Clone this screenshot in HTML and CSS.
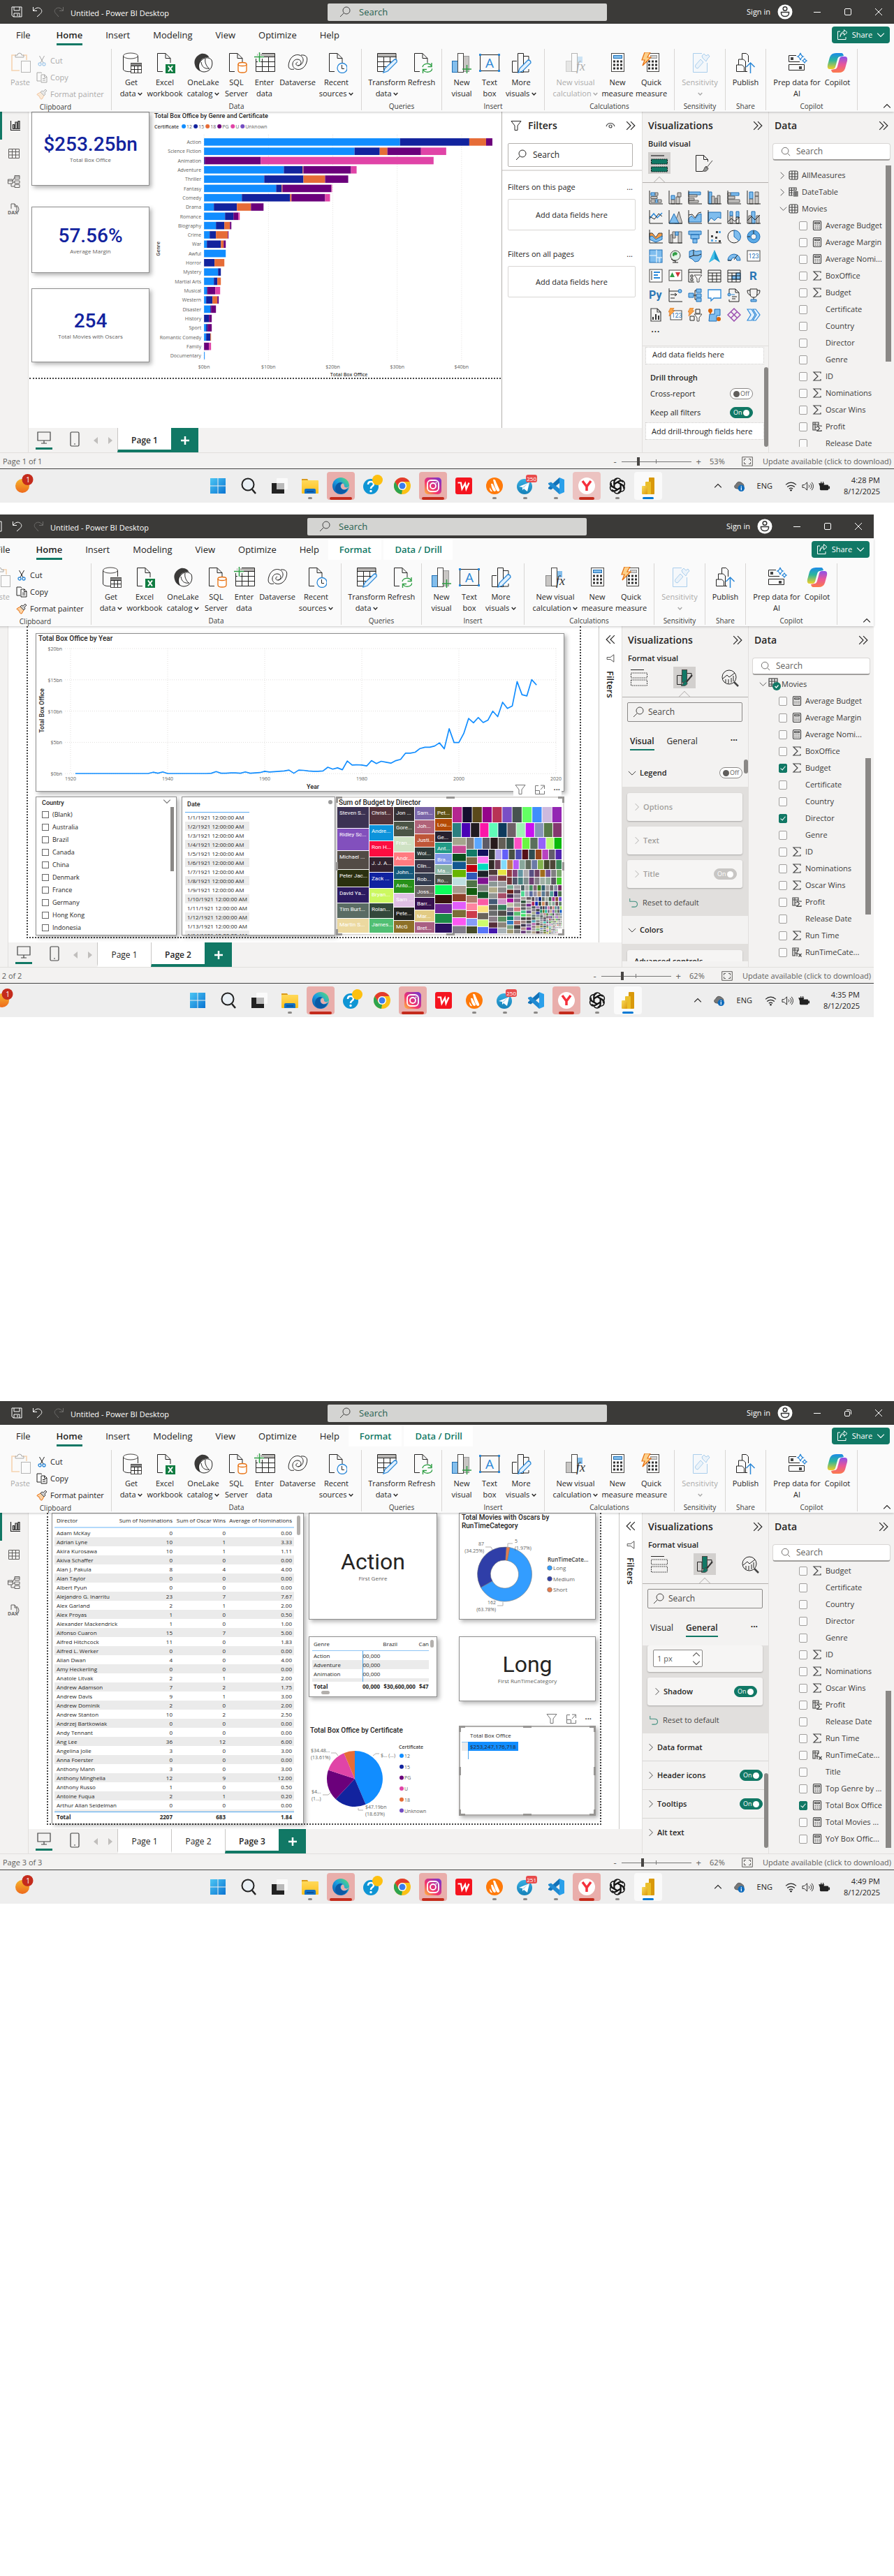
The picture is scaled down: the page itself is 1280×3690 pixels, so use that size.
FILE: index.html
```html
<!DOCTYPE html>
<html lang="en">
<head>
<meta charset="utf-8">
<title>Movies report - Power BI Desktop</title>
<link rel="stylesheet" href="styles.css">
</head>
<body>

<svg class="sprite" aria-hidden="true">
  <defs>
    <linearGradient id="gr-edge" x1="0" y1="1" x2="1" y2="0"><stop offset="0" stop-color="#0b4fa0"/><stop offset=".5" stop-color="#1b9de2"/><stop offset="1" stop-color="#5fe36a"/></linearGradient>
    <linearGradient id="gr-insta" x1="0" y1="1" x2="1" y2="0"><stop offset="0" stop-color="#fdc13a"/><stop offset=".4" stop-color="#f5326e"/><stop offset="1" stop-color="#6a35d8"/></linearGradient>
    <linearGradient id="gr-win" x1="0" y1="0" x2="1" y2="1"><stop offset="0" stop-color="#4cc6f4"/><stop offset="1" stop-color="#0a74d2"/></linearGradient>
    <linearGradient id="gr-sun" x1="0" y1="0" x2="0" y2="1"><stop offset="0" stop-color="#f5b52c"/><stop offset="1" stop-color="#ee6a1c"/></linearGradient>
    <linearGradient id="gr-folder" x1="0" y1="0" x2="0" y2="1"><stop offset="0" stop-color="#ffd95a"/><stop offset="1" stop-color="#fdbf1d"/></linearGradient>
    <linearGradient id="gr-tg" x1="0" y1="0" x2="0" y2="1"><stop offset="0" stop-color="#37aee2"/><stop offset="1" stop-color="#1581b8"/></linearGradient>
    <linearGradient id="gr-pbi" x1="0" y1="0" x2="1" y2="1"><stop offset="0" stop-color="#f9dc5c"/><stop offset="1" stop-color="#dc9a0d"/></linearGradient>
    <linearGradient id="gr-cp1" x1="0" y1="0" x2="0" y2="1"><stop offset="0" stop-color="#1b8ae8"/><stop offset=".45" stop-color="#2cb59d"/><stop offset="1" stop-color="#f3cf25"/></linearGradient>
    <linearGradient id="gr-cp2" x1="0" y1="0" x2="0" y2="1"><stop offset="0" stop-color="#8c52e8"/><stop offset=".5" stop-color="#e8569a"/><stop offset="1" stop-color="#fc7a4a"/></linearGradient>
  </defs>

  <!-- window chrome -->
  <symbol id="save" viewBox="0 0 16 16"><path d="M1 1h14v14H3l-2-2zM4 1v5h8V1M4 15v-5h8v5M9 11v3" class="s-lt"/></symbol>
  <symbol id="undo" viewBox="0 0 16 16"><path d="M1.500 1v5.500h5.500M2 6C5 2 9 1 12 3.500c3 3 2 5-1 8L7 15" class="s-lt"/></symbol>
  <symbol id="redo" viewBox="0 0 16 16"><path d="M14.500 1v5.500H9M14 6C11 2 7 1 4 3.500c-3 3-2 5 1 8L8 15" stroke="#6f6e6c" fill="none"/></symbol>
  <symbol id="find" viewBox="0 0 16 16"><circle cx="10" cy="6" r="5" class="s"/><path d="M6.500 9.500L1 15" class="s"/></symbol>
  <symbol id="findr" viewBox="0 0 16 16"><circle cx="7" cy="7" r="5.500" class="s"/><path d="M11 11l4 4" class="s"/></symbol>
  <symbol id="avatar" viewBox="0 0 22 22"><circle cx="11" cy="11" r="10.500" fill="#fff"/><circle cx="11" cy="6.500" r="2.800" fill="none" stroke="#333" stroke-width="1.500"/><path d="M5.500 11.500h11v1.500c0 6-11 6-11 0z" fill="none" stroke="#333" stroke-width="1.500"/></symbol>
  <symbol id="min" viewBox="0 0 12 12"><path d="M1 6.500h10" class="s-lt"/></symbol>
  <symbol id="max" viewBox="0 0 12 12"><rect x="1.500" y="1.500" width="9" height="9" rx="1.500" class="s-lt"/></symbol>
  <symbol id="restore" viewBox="0 0 12 12"><rect x="1.500" y="3.500" width="7" height="7" rx="1.500" class="s-lt"/><path d="M4 1.500h4.500q2 0 2 2V8" class="s-lt"/></symbol>
  <symbol id="close" viewBox="0 0 12 12"><path d="M1 1l10 10M11 1L1 11" class="s-lt"/></symbol>
  <symbol id="share" viewBox="0 0 16 16"><path d="M5 3H1.500v11.500H13V11M5 10.500C5.500 7 7.500 5.500 10.500 5.500V8.500L15 4.500 10.500.7v2.800C7 3.500 5 6.500 5 10.500z" class="s-lt"/></symbol>
  <symbol id="chev" viewBox="0 0 10 10"><path d="M1 3l4 4 4-4" class="s"/></symbol>
  <symbol id="chev-r" viewBox="0 0 10 14"><path d="M2 1l6 6-6 6" class="s"/></symbol>
  <symbol id="chev-d" viewBox="0 0 14 10"><path d="M1 2l6 6 6-6" class="s"/></symbol>
  <symbol id="dbl" viewBox="0 0 12 12"><path d="M1 1l5 5-5 5M6 1l5 5-5 5" class="s"/></symbol>
  <symbol id="dbl-l" viewBox="0 0 12 12"><path d="M6 1L1 6l5 5M11 1L6 6l5 5" class="s"/></symbol>

  <!-- ribbon -->
  <symbol id="paste" viewBox="0 0 30 30"><path d="M9 4H3v22h11M19 4h5v7" fill="none" stroke="#f0973c" stroke-width="1.600"/><path d="M8 7h12V4h-3a3 3 0 0 0-6 0H8z" class="s"/><rect x="16.500" y="12.500" width="13" height="16" fill="#fff" class="so"/></symbol>
  <symbol id="cut" viewBox="0 0 14 16"><path d="M3.500 1L9 11M10.500 1L5 11" class="s"/><circle cx="4" cy="13" r="2" class="sb"/><circle cx="10" cy="13" r="2" class="sb"/></symbol>
  <symbol id="copy" viewBox="0 0 16 16"><path d="M6 13H1V1h6l1 1M7 4h5l3 3v8H7zM11.500 4v3.500H15M9 9.500h4M9 12h4" class="s"/></symbol>
  <symbol id="painter" viewBox="0 0 16 16"><path d="M1 8l5-3 5 5-3 5c-2 0-3-1-3-3-1 0-1-1-1-2-2 0-3-1-3-2z" fill="#fbd3a6" stroke="#e8700f"/><path d="M6 5l2-2 2 1 3-3 2 2-3 3 1 2-2 2z" fill="#d0d0d0" class="so"/></symbol>
  <symbol id="getdata" viewBox="0 0 30 30"><path d="M3.500 5v19c0 3 6 4 11 3.500M24.500 5v9" class="s"/><ellipse cx="14" cy="5" rx="10.500" ry="4" fill="#fff" class="so"/><rect x="14.500" y="15.500" width="15" height="14" fill="#fff" class="so"/><path d="M14.500 16h15v3h-15z" fill="#888"/><path d="M14.500 19.500h15M14.500 24.500h15M19.500 19v10M24.500 19v10" class="s"/></symbol>
  <symbol id="page" viewBox="0 0 30 30"><path d="M12 27.500H4.500v-26H16l7 7V15M16 1.500v7h7" class="s"/></symbol>
  <symbol id="excel" viewBox="0 0 30 30"><use href="#page"/><rect x="16" y="17" width="14" height="13" fill="#107c41"/><path d="M20 19.500l6 8M26 19.500l-6 8" stroke="#fff" stroke-width="2"/></symbol>
  <symbol id="onelake" viewBox="0 0 30 30"><path d="M12 2C4 5 1 12 3 18c1 5 5 8 8 9-3-6-3-13 3-18 5-2 9-3 10 0-1-5-6-8-12-7z" fill="#3b3a39"/><path d="M12 14c1 7 5 10 12 9M27 11c3 8-2 17-11 17-8 0-11-9-5-15 4-6 12-7 16-2zM18 9c-1 5 1 10 5 14" class="s"/></symbol>
  <symbol id="sql" viewBox="0 0 30 30"><use href="#page"/><path d="M17 17v9c0 4 12 4 12 0v-9" fill="#fff" stroke="#e8700f" stroke-width="1.300"/><ellipse cx="23" cy="17" rx="6" ry="2.500" fill="#fff" stroke="#e8700f" stroke-width="1.300"/></symbol>
  <symbol id="enter" viewBox="0 0 30 30"><path d="M4 2h25v4H4z" fill="#b8b6b4"/><path d="M2.500 9v18.500h27v-26H11M2.500 13.500h27M2.500 20.500h27M11.500 9v18.500M20.500 6v21.500M11 6.500h18" class="s"/><path d="M7 0v14M0 7h14" stroke="#fafafa" stroke-width="4"/><path d="M7.500 0v14M0 6.500h14" stroke="#2f9e44" stroke-width="1.500"/></symbol>
  <symbol id="dataverse" viewBox="0 0 30 30"><path d="M20 4c8-1 10 4 8 10-2 8-9 12-15 10-8-3-6-14 2-14 6 0 7 8 1 9-4 0-4-4-1-5M10 24c-8 2-9-4-7-10C5 6 12 2 18 4c8 3 6 14-2 15" class="s"/></symbol>
  <symbol id="recent" viewBox="0 0 30 30"><use href="#page"/><circle cx="23" cy="22.500" r="7" fill="#fff" stroke="#2b88d8" stroke-width="1.300"/><path d="M22.500 18v5.500H26" class="s"/></symbol>
  <symbol id="transform" viewBox="0 0 30 30"><path d="M2 2h26v4H2z" fill="#b8b6b4"/><path d="M28 12V1.500H1.500v26H12M1.500 6.500h27M1.500 13.500h24M1.500 20.500h15M10.500 6v21M19.500 6v10" class="s"/><path d="M10 29l2-6L26 10q4 0 3 4L16 27z" fill="#e2f1fd" stroke="#2b88d8" stroke-width="1.300"/></symbol>
  <symbol id="refresh" viewBox="0 0 30 30"><use href="#page"/><path d="M16 21c1-5 10-7 13-1M29 15v5.500h-5.500M30 23c-1 6-10 7-13 2M16.500 30v-5.500H22" fill="#fff" stroke="#2f9e44" stroke-width="1.400"/></symbol>
  <symbol id="newvisual" viewBox="0 0 30 30"><rect x="1.500" y="12.500" width="9" height="16" fill="#83beec" stroke="#1f6fb5"/><rect x="17.500" y="5.500" width="8" height="22" fill="#c8c6c4" stroke="#999"/><rect x="9.500" y="1.500" width="8" height="27" fill="#fff" class="so"/><path d="M22.500 18v12M16 24h13" stroke="#2f9e44" stroke-width="1.500"/></symbol>
  <symbol id="textbox" viewBox="0 0 30 30"><rect x="1.500" y="3.500" width="27" height="23" class="s"/><path d="M0 2h3v3H0zM27 2h3v3h-3zM0 25h3v3H0zM27 25h3v3h-3z" fill="#2b88d8"/><text x="15" y="22" font-size="19" text-anchor="middle" fill="#2b88d8" class="segoe">A</text></symbol>
  <symbol id="morevisuals" viewBox="0 0 30 30"><path d="M9 12.500H2.500v16h16v-27h-8v27M19 5.500h7v6M26 24v4h-8" class="s"/><path d="M11 29l2-6L25 11q4 0 4 4L17 27z" fill="#e2f1fd" stroke="#2b88d8" stroke-width="1.300"/></symbol>
  <symbol id="fx" viewBox="0 0 30 30"><rect x="1.500" y="12.500" width="9" height="15" fill="#c8c6c4" stroke="#888"/><rect x="16" y="6" width="9" height="9" fill="#83beec"/><rect x="9.500" y="1.500" width="8" height="26" fill="#fff" class="so"/><text x="16" y="26" font-size="18" font-style="italic" fill="#333" class="serif">fx</text></symbol>
  <symbol id="measure" viewBox="0 0 30 30"><rect x="6.500" y="1.500" width="18" height="26" fill="#fff" class="so"/><rect x="9.500" y="4.500" width="12" height="4" fill="#83beec" stroke="#1f6fb5"/><path d="M9 13h13M9 18h13M9 23h13" stroke="#333" stroke-width="3" stroke-dasharray="3 2"/></symbol>
  <symbol id="quick" viewBox="0 0 30 30"><rect x="8.500" y="1.500" width="17" height="26" fill="#fff" class="so"/><rect x="13.500" y="4.500" width="9" height="4" fill="#d0d0d0" stroke="#999"/><path d="M10 13h13M10 18h13M10 23h13" stroke="#333" stroke-width="3" stroke-dasharray="3 2"/><path d="M5 0h8L9 7h5L2 19l3-8H1z" fill="#fcd08a" stroke="#e8700f" stroke-width="1.200"/></symbol>
  <symbol id="sensitivity" viewBox="0 0 30 30"><path d="M18 1.500H5.500v27h20V15" fill="#eef6fd" stroke="#2b88d8"/><path d="M9 18L16 10l4 4-8 9q-5-1-3-5zM18 5l3-3 3 3 3-2 2 3-3 3-2 4-5-5z" fill="#d5e9fa" stroke="#2b88d8"/></symbol>
  <symbol id="publish" viewBox="0 0 30 30"><path d="M10.500 10V1.500h6l3 3V14M5.500 18v-8h7l3 3v14M2.500 27.500V18h8l3 3v6.500zM14 27.500h4" class="s"/><path d="M22.500 30V15M16.500 21l6-6 6 6" fill="none" stroke="#2b88d8" stroke-width="1.500"/></symbol>
  <symbol id="prep" viewBox="0 0 30 30"><path d="M14 4.500H3.500v9H19M3.500 17.500h22v8h-22z" class="s"/><path d="M6 7h4v4H6zM18 20h4v4h-4z" fill="#444"/><path d="M20 1q1 4 4 5-3 1-4 5-1-4-4-5 3-1 4-5zM26 9q1 2 3 3-2 1-3 3-1-2-3-3 2-1 3-3z" fill="#fff" stroke="#2b88d8" stroke-width="1.200"/></symbol>
  <symbol id="copilot" viewBox="0 0 30 30"><path d="M13 1h8q2 0 3 4l-5 1q-3 0-4 4l-3 11q-1 3-4 3H4q-4 0-3-6l3-11Q6 1 13 1z" fill="url(#gr-cp1)"/><path d="M17 29H9q-2 0-3-4l5-1q3 0 4-4l3-11q1-3 4-3h4q4 0 3 6l-3 11q-2 6-9 6z" fill="url(#gr-cp2)"/></symbol>

  <!-- navigation rail -->
  <symbol id="r-report" viewBox="0 0 16 16"><path d="M1.500 1v13.500H15M4.500 6.500h2v6h-2zM8 3h2.500v9.500H8zM12 1.500h2v11h-2z" fill="none" stroke="#222" stroke-width="1.200"/></symbol>
  <symbol id="r-table" viewBox="0 0 16 16"><path d="M.5 1.500h15v13H.5zM.5 5.500h15M.5 10h15M5.500 1.500v13M10.500 1.500v13" class="s"/></symbol>
  <symbol id="r-model" viewBox="0 0 18 18"><path d="M10 .5h7v5h-7zM10 8h7v3.500h-7zM10 13.500h7v4h-7zM.5 6h6.500v6H.5zM.5 8H7M10 2.500h7M7 8l3-5M7 10h3M5 12v4h5" class="s"/></symbol>
  <symbol id="r-dax" viewBox="0 0 18 18"><path d="M5 8V1h5l3 4v6M10 1v4h3M13 3q3 3 3 6t-3 6" class="s"/><text x="0" y="16" font-size="7" font-weight="700" fill="#666" class="segoe">DAX</text></symbol>

  <!-- panes -->
  <symbol id="funnel" viewBox="0 0 16 16"><path d="M1 1.500h14L10 8v6.500H6V8z" class="s"/></symbol>
  <symbol id="eye" viewBox="0 0 14 10"><path d="M1 6c2-6 10-6 12 0" class="s2"/><circle cx="7" cy="6" r="2" class="s2"/></symbol>
  <symbol id="focus" viewBox="0 0 16 16"><path d="M6 2.500H1.500v12h13V10M1.500 9.500h6v5M9 2h5.500v5M14 2.500L9 8" class="s"/></symbol>
  <symbol id="build" viewBox="0 0 26 26"><path d="M1 2h19" stroke="#444" stroke-width="1.500"/><rect x="1.500" y="7" width="23" height="7" fill="#117865" stroke="#111" stroke-dasharray="2 1"/><rect x="1.500" y="18" width="23" height="7" fill="#117865" stroke="#111" stroke-dasharray="2 1"/></symbol>
  <symbol id="build-off" viewBox="0 0 26 26"><path d="M1 1.500h19" class="s"/><rect x="1.500" y="6" width="23" height="7" fill="none" stroke="#444" stroke-dasharray="2 1"/><rect x="1.500" y="16" width="23" height="8" fill="none" stroke="#444" stroke-dasharray="2 1"/></symbol>
  <symbol id="fmt-page" viewBox="0 0 26 26"><path d="M11 24.500H1.500v-23h11l6 6v3M12.500 1.500v6h6" class="s"/><path d="M25 9l-9 11M16 17l3 3c-1 4-4 5-8 4 2-1 2-3 3-5z" fill="#999" class="so"/></symbol>
  <symbol id="fmt-visual" viewBox="0 0 26 26"><path d="M2.500 9.500H9v13H2.500zM16 6.500h7v5" class="s"/><rect x="9.500" y="1.500" width="7" height="18" fill="#117865" class="so"/><path d="M24 9l-9 11" stroke="#333" stroke-width="2"/><path d="M14 17l3 3c0 4-4 5-9 4 3-1 3-4 6-7z" fill="#117865" class="so"/></symbol>
  <symbol id="analytics" viewBox="0 0 26 26"><circle cx="12" cy="12" r="10" class="s"/><path d="M19 19l6 6" stroke="#444" stroke-width="2.500"/><path d="M3 14l6-5 3 3 8-6M7 20v-5M11 21v-6M15 20v-7M18 18v-8" class="s"/></symbol>
  <symbol id="reset" viewBox="0 0 16 16"><path d="M2 1v5h5M2 6h7c7 0 7 9 0 9H5" fill="none" stroke="#3f8f7f" stroke-width="1.200"/></symbol>
  <symbol id="tbl" viewBox="0 0 14 14"><rect x="1" y="1" width="12" height="12" rx="2" class="s2"/><path d="M1 5h12M1 9h12M5 1v12M9 1v12" class="s2"/></symbol>
  <symbol id="tbl-date" viewBox="0 0 14 14"><path d="M6 12H1V1h10v4M1 4.500h10M1 8h5M4.500 1v11M8 1v4" class="s2"/><rect x="7" y="6" width="6.500" height="7.500" fill="#555"/><path d="M8 8h4.500M8 10h4.500M8 12h4.500" stroke="#f3f2f1" stroke-width=".8" stroke-dasharray="1 .7"/></symbol>
  <symbol id="tbl-ok" viewBox="0 0 18 18"><rect x="1" y="1" width="12" height="11" class="s2"/><path d="M1 5h12M1 9h12M5 1v11M9 1v11" class="s2"/><circle cx="12" cy="12" r="6" fill="#117865"/><path d="M9.500 12l2 2 3-3.500" fill="none" stroke="#fff" stroke-width="1.200"/></symbol>
  <symbol id="calc" viewBox="0 0 14 14"><rect x="1.500" y=".5" width="11" height="13" rx="1.500" class="s2"/><rect x="3.700" y="2.700" width="6.600" height="2" class="s2"/><path d="M3.500 7.500h7.500M3.500 9.500h7.500M3.500 11.500h7.500" stroke="#444" stroke-width="1.200" stroke-dasharray="1.500 1.300"/></symbol>
  <symbol id="sum" viewBox="0 0 14 14"><path d="M12 3V1H2l6 6-6 6h10v-2" class="s2"/></symbol>
  <symbol id="colsum" viewBox="0 0 14 14"><path d="M7 12H1V1h8v4M1 4h8M4 1v11M4 8h3M13 7V6H7l3.500 3.500L7 13.300h6V12" class="s2"/></symbol>
  <symbol id="colfx" viewBox="0 0 14 14"><path d="M5 12H1V1h8v4M1 4h8M4 1v11M4 8h2M9 5.500q-2-1-2 2V13M5.500 9H9M9.500 9l4 4.500M13.500 9l-4 4.500" class="s2"/></symbol>

  <!-- page bar and tray -->
  <symbol id="desktop" viewBox="0 0 20 18"><path d="M1 1h18v12H1zM10 13v4M6 17h8" class="s2"/></symbol>
  <symbol id="phone" viewBox="0 0 14 22"><rect x="1" y="1" width="12" height="20" rx="1.500" class="s2"/><path d="M6 18h2" class="s2"/></symbol>
  <symbol id="tri-l" viewBox="0 0 6 10"><path d="M6 0v10L0 5z" fill="#c0bebc"/></symbol>
  <symbol id="tri-r" viewBox="0 0 6 10"><path d="M0 0v10l6-5z" fill="#c0bebc"/></symbol>
  <symbol id="plus" viewBox="0 0 12 12"><path d="M6 0v12M0 6h12" stroke="#fff" stroke-width="2.500"/></symbol>
  <symbol id="fit" viewBox="0 0 16 14"><path d="M.7.7h14.600v12.600H.7zM3.500 6V3.500H6M10 3.500h2.500V6M12.500 8v2.500H10M6 10.500H3.500V8" class="s"/></symbol>
  <symbol id="cloud" viewBox="0 0 18 18"><path d="M3 12q-3-3 1-6 3-6 9-2 3 2 3 5H9l-2 4z" fill="#777" stroke="#555"/><circle cx="12" cy="12" r="5" fill="#0f6cbd"/><path d="M12 10.500V15M12 8.500V9.700" stroke="#fff" stroke-width="1.300"/></symbol>
  <symbol id="wifi" viewBox="0 0 16 16"><path d="M1 6q7-6 14 0M3 9q5-4 10 0M5.500 11.500q2.500-2 5 0" fill="none" stroke="#222" stroke-width="1.200"/><circle cx="8" cy="13.500" r="1.200" fill="#222"/></symbol>
  <symbol id="sound" viewBox="0 0 18 16"><path d="M1 6v4h3l4 4V2L4 6zM10.500 6q2 2 0 4M13 4q3.500 4 0 8M15 2q5 6 0 12" class="s"/></symbol>
  <symbol id="battery" viewBox="0 0 18 16"><rect x="2" y="6" width="13" height="8" rx="1.500" fill="#222"/><path d="M16 8v4" stroke="#222" stroke-width="2"/><path d="M4 1v4M1 4h7l-2 5H3zM7 1v3" fill="#222" stroke="#222" stroke-width="1.200"/></symbol>

  <!-- taskbar apps -->
  <symbol id="a-weather" viewBox="0 0 26 28"><circle cx="10" cy="17" r="10" fill="url(#gr-sun)"/><circle cx="17.500" cy="8" r="8" fill="#c42b1c"/></symbol>
  <symbol id="a-windows" viewBox="0 0 24 24"><path d="M1 1h10.500v10.500H1zM12.500 1H23v10.500H12.500zM1 12.500h10.500V23H1zM12.500 12.500H23V23H12.500z" fill="url(#gr-win)"/></symbol>
  <symbol id="a-search" viewBox="0 0 24 24"><circle cx="11" cy="10" r="8.500" fill="#eaf0f5" stroke="#222" stroke-width="2"/><path d="M17 17l5 6" stroke="#222" stroke-width="2.500"/></symbol>
  <symbol id="a-taskview" viewBox="0 0 24 24"><rect x="8" y="1" width="16" height="16" rx="1" fill="#fafafa"/><path d="M1 8h7v9h11v6H1z" fill="#222"/><rect x="8" y="8" width="11" height="9" fill="#b9b9b9"/></symbol>
  <symbol id="a-files" viewBox="0 0 24 24"><path d="M0 2h8l2 3h14v3H0z" fill="#d99a1b"/><rect y="4" width="24" height="19" rx="1" fill="url(#gr-folder)"/><path d="M4 23v-5q0-2 2-2h12q2 0 2 2v5z" fill="#1170c4"/><path d="M7 20h10" stroke="#0a4c8c" stroke-width="1.500"/></symbol>
  <symbol id="a-edge" viewBox="0 0 24 24"><circle cx="12" cy="12" r="12" fill="url(#gr-edge)"/><path d="M22 15q-3 4-7 2c-5-2-5-8 0-9-5-3-11 1-11 8 0 5 6 9 11 7 4-1 6-4 7-8z" fill="#0c59a4"/><path d="M15 8.500c-4 1-4 7 0 8.500 4 1 8-2 9-5-2 3-5 3-7 1 0-2 0-3-2-4.500z" fill="#e8adab"/></symbol>
  <symbol id="a-help" viewBox="0 0 28 28"><circle cx="11" cy="17" r="11" fill="#0f95d4"/><path d="M7 14q0-4 4-4t4 3.500q0 2-2.500 3.500-1.500 1-1.500 3" fill="none" stroke="#fff" stroke-width="2.600"/><circle cx="11" cy="23.500" r="1.700" fill="#fff"/><circle cx="20.500" cy="7.500" r="7.500" fill="#fdc010"/></symbol>
  <symbol id="a-chrome" viewBox="0 0 24 24"><circle cx="12" cy="12" r="12" fill="#fbc116"/><path d="M1.600 6A12 12 0 0 1 22.400 6H12a6 6 0 0 0-5.200 9z" fill="#e33b2e"/><path d="M1.600 6L6.800 15a6 6 0 0 0 5.200 3l-1 6A12 12 0 0 1 1.600 6z" fill="#2da44f"/><circle cx="12" cy="12" r="6" fill="#fff"/><circle cx="12" cy="12" r="4.500" fill="#3b7ded"/></symbol>
  <symbol id="a-insta" viewBox="0 0 24 24"><rect width="24" height="24" rx="5" fill="url(#gr-insta)"/><rect x="4" y="4" width="16" height="16" rx="5" fill="none" stroke="#fff" stroke-width="1.800"/><circle cx="12" cy="12" r="4" fill="none" stroke="#fff" stroke-width="1.800"/><circle cx="16.500" cy="7.500" r="1" fill="#fff"/></symbol>
  <symbol id="a-wps" viewBox="0 0 24 24"><rect width="24" height="24" rx="3" fill="#f5141f"/><path d="M3.500 7.500h4.500l1.500 9L14 8.500l1.500 8 4-9" fill="none" stroke="#fff" stroke-width="2.200"/></symbol>
  <symbol id="a-avast" viewBox="0 0 24 24"><circle cx="12" cy="12" r="12" fill="#ff7a0a"/><path d="M10 3q3-1 4 3l5 11q1 3-2 3-4-1-7-17zM7 9q2-1 3 1l4 8q0 2-2 2-4-2-5-11zM5 14l4 6q-4 1-4-6z" fill="#fff"/></symbol>
  <symbol id="a-telegram" viewBox="0 0 28 28"><circle cx="11" cy="17" r="11" fill="url(#gr-tg)"/><path d="M3 17l15-6-3 13-5-4-2 2v-4z" fill="#fff"/><path d="M8 18l8-6-6 7z" fill="#b9d9ec"/></symbol>
  <symbol id="a-code" viewBox="0 0 24 24"><path d="M17 0v8l-12 9.500L1 16v-1.500z" fill="#1272b8"/><path d="M17 24v-8L5 6.500 1 8v1.500z" fill="#1f8ad2"/><path d="M17 0l7 3v18l-7 3z" fill="#2aa0ea"/></symbol>
  <symbol id="a-yandex" viewBox="0 0 24 24"><circle cx="12" cy="12" r="12" fill="#fff"/><path d="M6 5l6 8v6M18 5l-6 8" fill="none" stroke="#f5303c" stroke-width="3.500"/></symbol>
  <symbol id="a-gpt" viewBox="0 0 24 24"><g fill="none" stroke="#111" stroke-width="1.500"><path id="gpt-leaf" d="M7 15V6.500C7 .5 14-.8 16.700 3.600M7 10l7.200-4.200c2-1.100 4.200-.7 5.800.8"/><use href="#gpt-leaf" transform="rotate(60 12 12)"/><use href="#gpt-leaf" transform="rotate(120 12 12)"/><use href="#gpt-leaf" transform="rotate(180 12 12)"/><use href="#gpt-leaf" transform="rotate(240 12 12)"/><use href="#gpt-leaf" transform="rotate(300 12 12)"/></g></symbol>
  <symbol id="a-pbi" viewBox="0 0 24 24"><rect x="13" y="0" width="8" height="24" rx="1" fill="#d9990b"/><rect x="8" y="6" width="8" height="18" rx="1" fill="#ebbf2b"/><rect x="3" y="12" width="8" height="12" rx="1" fill="url(#gr-pbi)"/></symbol>

  <!-- visual gallery -->
  <symbol id="v1" viewBox="0 0 20 20"><path d="M3 3h6v4H3zM9 13h4v4H9z" class="gb"/><path d="M9 3h4v4H9zM3 8.500h9v3H3zM13 13h5v4h-5zM3 13h6v4H3z" class="gg"/><path d="M1 0v19h19" class="s"/></symbol>
  <symbol id="v2" viewBox="0 0 20 20"><path d="M4 7h5v6H4z" class="gb"/><path d="M4 13h5v6H4zM11 9h5v10h-5zM13 3h5v6h-5z" class="gg"/><path d="M1 0v19h19" class="s"/></symbol>
  <symbol id="v3" viewBox="0 0 20 20"><path d="M1 2h17v4H1z" class="gb"/><path d="M1 6h12v3H1zM1 11h8v3H1zM1 14h14v3H1z" class="gg"/><path d="M1 0v19h19" class="s"/></symbol>
  <symbol id="v4" viewBox="0 0 20 20"><path d="M2 2h4v17H2z" class="gb"/><path d="M6 8h4v11H6zM11 11h3v8h-3zM14 7h4v12h-4z" class="gg"/><path d="M1 0v19h19" class="s"/></symbol>
  <symbol id="v5" viewBox="0 0 20 20"><path d="M5 3h12v4H5z" class="gb"/><path d="M1 3h4v4H1zM1 8h10v4H1zM1 13h17v4H1z" class="gg"/><path d="M1 0v19h19" class="s"/></symbol>
  <symbol id="v6" viewBox="0 0 20 20"><path d="M4 2h5v10H4z" class="gb"/><path d="M4 12h5v7H4zM12 8h5v11h-5zM12 2h5v6h-5z" class="gg"/><path d="M1 0v19h19" class="s"/></symbol>
  <symbol id="v7" viewBox="0 0 20 20"><path d="M1 12l6-7 5 6 7-7" fill="none" stroke="#2b88d8" stroke-width="1.500"/><path d="M1 9l7 4 6-8 5 4M1 0v19h19" class="s"/></symbol>
  <symbol id="v8" viewBox="0 0 20 20"><path d="M9 19l6-17 5 17z" class="gg"/><path d="M1 19L8 5l7 14z" class="gb"/><path d="M1 0v19h19" class="s"/></symbol>
  <symbol id="v9" viewBox="0 0 20 20"><path d="M1 12l4-4 5 5 4-6 5-2v12H1z" class="gb"/><path d="M1 7l5-1 4 5 5-7 4-1M1 0v19h19" class="s"/></symbol>
  <symbol id="v10" viewBox="0 0 20 20"><path d="M1 3h18v9l-4-2-5 5-5-4-4 6z" class="gb"/><path d="M1 0v19h19" class="s"/></symbol>
  <symbol id="v11" viewBox="0 0 20 20"><path d="M4 8h4v11H4z" class="gg"/><path d="M4 2h4v6H4zM13 2h4v8h-4z" class="gb"/><path d="M13 10h4v9h-4zM1 17l5-5 5 4 7-6M1 0v19h19" class="s"/></symbol>
  <symbol id="v12" viewBox="0 0 20 20"><path d="M7 2h5v17H7z" class="gb"/><path d="M3 8h4v11H3zM14 8h4v11h-4z" class="gg"/><path d="M1 15l6-6 5 5 7-7M1 0v19h19" class="s"/></symbol>
  <symbol id="v13" viewBox="0 0 20 20"><path d="M1 5h4l5 6 4-6h5v5l-4 2-5 6-5-4-4-3z" fill="#f39b45" stroke="#444"/><path d="M1 10l4-1 5 5 9-5v5l-9 4-9-4z" class="gb"/><path d="M1 0v19h19" class="s"/></symbol>
  <symbol id="v14" viewBox="0 0 20 20"><path d="M3 7h3v12H3zM6 3h4v9H6zM14 3h5v16h-5z" class="gg"/><path d="M10 3h4v5h-4z" class="gb"/><path d="M1 0v19h19" class="s"/></symbol>
  <symbol id="v15" viewBox="0 0 20 20"><path d="M1 2h18v5H1zM4 7h12v6H4zM7 13h6v6H7z" class="gb"/></symbol>
  <symbol id="v16" viewBox="0 0 20 20"><path d="M12 2h3v3h-3zM5 8h3v3H5zM11 10h3v3h-3zM16 15h3v3h-3z" fill="#444"/><path d="M16 2h3v3h-3zM5 14h3v3H5zM11 15h2v2h-2z" fill="#5aa9e6"/><path d="M1 0v19h19" class="s"/></symbol>
  <symbol id="v17" viewBox="0 0 20 20"><circle cx="10" cy="10" r="9" class="s"/><path d="M10 1v9l7 6a9 9 0 0 0-7-15z" class="gb"/></symbol>
  <symbol id="v18" viewBox="0 0 20 20"><circle cx="10" cy="10" r="6.500" fill="none" stroke="#5aa9e6" stroke-width="5"/><circle cx="10" cy="10" r="9" fill="none" stroke="#1f6fb5"/><circle cx="10" cy="10" r="4" fill="none" stroke="#1f6fb5"/><path d="M10 1v5M1 10h4" class="s"/></symbol>
  <symbol id="v19" viewBox="0 0 20 20"><rect x="1" y="1" width="18" height="18" class="gb"/><path d="M11 1v11h8M11 12v7M15 12v7M1 9h10" fill="none" stroke="#fff"/></symbol>
  <symbol id="v20" viewBox="0 0 20 20"><circle cx="10" cy="9" r="7" fill="#e6f4ea" class="so"/><path d="M6 6q4-4 7 0-1 4-4 2-1 4-3 1z" fill="#2f9e44"/><path d="M10 16v3M6 19h8M4 14q2 3 6 3" class="s"/></symbol>
  <symbol id="v21" viewBox="0 0 20 20"><path d="M2 3l6-2 3 2 8-1v9l-4 6-5 1-4-4-4-2z" class="gb"/><path d="M8 1v8l-6 2M8 9h6l5-2" class="s"/></symbol>
  <symbol id="v22" viewBox="0 0 20 20"><path d="M10 1l8 18-8-5-8 5z" fill="#1795c9"/><path d="M10 1v13l-8 5z" fill="#43c1e8"/></symbol>
  <symbol id="v23" viewBox="0 0 20 20"><path d="M1 16a9 9 0 0 1 18 0h-5a4 4 0 0 0-8 0z" class="gb"/><path d="M10 15l5-7M1 16h5" class="s"/></symbol>
  <symbol id="v24" viewBox="0 0 20 20"><rect x="1" y="2" width="18" height="15" fill="#fff" class="so"/><text x="10" y="13" font-size="9" text-anchor="middle" fill="#1f6fb5" class="din">123</text></symbol>
  <symbol id="v25" viewBox="0 0 20 20"><rect x="1" y="1" width="18" height="18" fill="#fff" class="so"/><path d="M7 5h9M7 9h6M7 13h9" stroke="#2b88d8" stroke-width="1.800"/><path d="M4 3v13" class="s"/></symbol>
  <symbol id="v26" viewBox="0 0 20 20"><rect x="1" y="2" width="18" height="15" fill="#fff" class="so"/><path d="M2 12l3.500-7L9 12z" fill="#2f9e44"/><path d="M10 5h7l-3.500 7z" fill="#d13438"/></symbol>
  <symbol id="v27" viewBox="0 0 20 20"><path d="M9 19H1V1h18v6M1 5h18M4 9h3v3H4zM4 14h3v3H4z" class="s"/><path d="M9 9h11l-4 5v5h-3v-5z" fill="#fff" class="so"/></symbol>
  <symbol id="v28" viewBox="0 0 20 20"><path d="M1 2h18v17H1zM1 6h18M1 10h18M1 15h18M7 6v13M13 6v13" class="s"/></symbol>
  <symbol id="v29" viewBox="0 0 20 20"><path d="M13 6h6v9h-6zM7 10h6v5H7z" class="gb"/><path d="M1 2h18v17H1zM1 6h18M1 10h18M1 15h18M7 6v13M13 6v13" class="s"/></symbol>
  <symbol id="v30" viewBox="0 0 20 20"><text x="4" y="16" font-size="17" font-weight="700" fill="#2b77b5" class="din">R</text></symbol>
  <symbol id="v31" viewBox="0 0 20 20"><text x="0" y="15" font-size="16" font-weight="700" fill="#2b77b5" class="din">Py</text></symbol>
  <symbol id="v32" viewBox="0 0 20 20"><path d="M1 0v19h19M1 4h13M3 9h8M3 14h6M9 7l3 2-3 2" class="s"/><circle cx="16.500" cy="4" r="2.500" class="gb"/></symbol>
  <symbol id="v33" viewBox="0 0 20 20"><path d="M1 7h7v6H1zM12 1h7v5h-7zM12 8h7v5h-7zM12 14h7v5h-7z" class="gb"/><path d="M8 10h4M10 3v13M10 3h2M10 16h2" class="s"/></symbol>
  <symbol id="v34" viewBox="0 0 20 20"><path d="M1 2h18v12H9l-4 4v-4H1z" fill="#fff" stroke="#2b88d8" stroke-width="1.300"/></symbol>
  <symbol id="v35" viewBox="0 0 20 20"><path d="M3 8V1h9l5 5v13H3v-3M12 1v5h5M7 12h7M7 15h5" class="s"/><circle cx="3" cy="9" r="2" class="gb"/><path d="M6 9h5" stroke="#2b88d8"/></symbol>
  <symbol id="v36" viewBox="0 0 20 20"><path d="M5 1h10v7q0 5-5 5t-5-5zM5 3H1q0 6 5 7M15 3h4q0 6-5 7M10 13v4" class="s"/><path d="M6 16h8v3H6z" class="gb"/></symbol>
  <symbol id="v37" viewBox="0 0 20 20"><path d="M3 1h9l5 5v13H3zM12 1v5h5" class="s2"/><path d="M6 17v-4M10 17V9M14 17v-6" stroke="#333" stroke-width="2"/></symbol>
  <symbol id="v38" viewBox="0 0 20 20"><rect x="3" y="4" width="16" height="13" fill="#fff" class="so"/><text x="12" y="14" font-size="9" text-anchor="middle" fill="#1f6fb5" class="din">123</text><path d="M3 0h5L6 4h3L1 12l1-6H0z" fill="#f7a54a" stroke="#d8650a" stroke-width=".6"/></symbol>
  <symbol id="v39" viewBox="0 0 20 20"><path d="M11 2h6v6h-6zM3 12h6v6H3z" class="s"/><path d="M9 9h11l-4 5v5h-3v-5z" fill="#fff" class="so"/><path d="M3 0h5L6 4h3L1 12l1-6H0z" fill="#f7a54a" stroke="#d8650a" stroke-width=".6"/></symbol>
  <symbol id="v40" viewBox="0 0 20 20"><path d="M3 9h7V2h8v9h-5v8H2z" class="gb"/><circle cx="4" cy="4" r="3" fill="#d8650a"/><path d="M2 5l2 5 2-5z" fill="#d8650a"/><circle cx="16" cy="16" r="3" fill="#d8650a"/></symbol>
  <symbol id="v41" viewBox="0 0 20 20"><path d="M10 1l9 9-9 9-9-9zM5.500 5.500l9 9M14.500 5.500l-9 9" fill="none" stroke="#9b4fb0" stroke-width="1.500"/></symbol>
  <symbol id="v42" viewBox="0 0 20 20"><path d="M1 2h6l5 8-5 8H1l5-8zM9 2h4l6 8-6 8H9l5-8z" fill="#e2f1fd" stroke="#2b88d8" stroke-width="1.200"/></symbol>
</svg>

<template id="chrome-template">
  <header class="titlebar">
    <div class="titlebar-left">
      <svg class="i16"><use href="#save"/></svg>
      <svg class="i16"><use href="#undo"/></svg>
      <svg class="i16"><use href="#redo"/></svg>
      <span class="doc-name">Untitled - Power BI Desktop</span>
    </div>
    <label class="top-search"><svg class="i16"><use href="#find"/></svg><input type="search" placeholder="Search" aria-label="Search"></label>
    <div class="titlebar-right">
      <a href="#" class="signin">Sign in</a>
      <svg class="avatar"><use href="#avatar"/></svg>
      <button class="winbtn" aria-label="Minimize"><svg class="i12"><use href="#min"/></svg></button>
      <button class="winbtn winbtn-size" aria-label="Maximize"><svg class="i12"><use href="#max"/></svg></button>
      <button class="winbtn" aria-label="Close"><svg class="i12"><use href="#close"/></svg></button>
    </div>
  </header>
  <div class="ribbon">
    <nav class="tabs">
      <button class="tab tab-file">File</button>
      <button class="tab tab-active">Home</button>
      <button class="tab">Insert</button>
      <button class="tab">Modeling</button>
      <button class="tab">View</button>
      <button class="tab">Optimize</button>
      <button class="tab">Help</button>
      <span class="context-tabs"><button class="tab tab-context">Format</button><button class="tab tab-context">Data / Drill</button></span>
      <button class="share"><svg class="i16"><use href="#share"/></svg><span>Share</span><svg class="i12 on-dark"><use href="#chev"/></svg></button>
    </nav>
    <div class="groups">
      <section class="group g-clipboard">
        <div class="group-body">
          <button class="rb disabled"><svg><use href="#paste"/></svg><span>Paste</span></button>
          <div class="clip-list needs-selection">
            <button class="small-btn"><svg class="i16"><use href="#cut"/></svg>Cut</button>
            <button class="small-btn"><svg class="i16"><use href="#copy"/></svg>Copy</button>
            <button class="small-btn"><svg class="i16"><use href="#painter"/></svg>Format painter</button>
          </div>
        </div>
        <h3>Clipboard</h3>
      </section>
      <section class="group g-data">
        <div class="group-body">
          <button class="rb"><svg><use href="#getdata"/></svg><span>Get<br>data <svg class="mini"><use href="#chev"/></svg></span></button>
          <button class="rb"><svg><use href="#excel"/></svg><span>Excel<br>workbook</span></button>
          <button class="rb"><svg><use href="#onelake"/></svg><span>OneLake<br>catalog <svg class="mini"><use href="#chev"/></svg></span></button>
          <button class="rb"><svg><use href="#sql"/></svg><span>SQL<br>Server</span></button>
          <button class="rb"><svg><use href="#enter"/></svg><span>Enter<br>data</span></button>
          <button class="rb"><svg><use href="#dataverse"/></svg><span>Dataverse</span></button>
          <button class="rb"><svg><use href="#recent"/></svg><span>Recent<br>sources <svg class="mini"><use href="#chev"/></svg></span></button>
        </div>
        <h3>Data</h3>
      </section>
      <section class="group g-queries">
        <div class="group-body">
          <button class="rb"><svg><use href="#transform"/></svg><span>Transform<br>data <svg class="mini"><use href="#chev"/></svg></span></button>
          <button class="rb"><svg><use href="#refresh"/></svg><span>Refresh</span></button>
        </div>
        <h3>Queries</h3>
      </section>
      <section class="group g-insert">
        <div class="group-body">
          <button class="rb"><svg><use href="#newvisual"/></svg><span>New<br>visual</span></button>
          <button class="rb"><svg><use href="#textbox"/></svg><span>Text<br>box</span></button>
          <button class="rb"><svg><use href="#morevisuals"/></svg><span>More<br>visuals <svg class="mini"><use href="#chev"/></svg></span></button>
        </div>
        <h3>Insert</h3>
      </section>
      <section class="group g-calc">
        <div class="group-body">
          <button class="rb needs-selection"><svg><use href="#fx"/></svg><span>New visual<br>calculation <svg class="mini"><use href="#chev"/></svg></span></button>
          <button class="rb"><svg><use href="#measure"/></svg><span>New<br>measure</span></button>
          <button class="rb"><svg><use href="#quick"/></svg><span>Quick<br>measure</span></button>
        </div>
        <h3>Calculations</h3>
      </section>
      <section class="group g-sens">
        <div class="group-body"><button class="rb disabled"><svg><use href="#sensitivity"/></svg><span>Sensitivity<br><svg class="mini"><use href="#chev"/></svg></span></button></div>
        <h3>Sensitivity</h3>
      </section>
      <section class="group g-share">
        <div class="group-body"><button class="rb"><svg><use href="#publish"/></svg><span>Publish</span></button></div>
        <h3>Share</h3>
      </section>
      <section class="group g-copilot">
        <div class="group-body">
          <button class="rb"><svg><use href="#prep"/></svg><span>Prep data for<br>AI</span></button>
          <button class="rb"><svg><use href="#copilot"/></svg><span>Copilot</span></button>
        </div>
        <h3>Copilot</h3>
      </section>
      <button class="collapse" aria-label="Collapse ribbon"><svg class="i12"><use href="#chev"/></svg></button>
    </div>
  </div>
</template>

<template id="rail-template">
  <button class="rail-btn rail-active" aria-label="Report view"><svg class="i16"><use href="#r-report"/></svg></button>
  <button class="rail-btn" aria-label="Table view"><svg class="i16"><use href="#r-table"/></svg></button>
  <button class="rail-btn" aria-label="Model view"><svg class="i18"><use href="#r-model"/></svg></button>
  <button class="rail-btn" aria-label="DAX query view"><svg class="i18"><use href="#r-dax"/></svg></button>
</template>

<template id="pagebar-template">
  <button class="view-btn view-active" aria-label="Desktop layout"><svg class="desktop"><use href="#desktop"/></svg></button>
  <button class="view-btn view-mobile" aria-label="Mobile layout"><svg class="phone"><use href="#phone"/></svg></button>
  <button class="page-arrow" aria-label="Previous page"><svg><use href="#tri-l"/></svg></button>
  <button class="page-arrow" aria-label="Next page"><svg><use href="#tri-r"/></svg></button>
</template>

<template id="bottom-template">
  <div class="statusbar">
    <span class="page-count"></span>
    <label class="zoom"><span>-</span><input type="range" min="10" max="150" aria-label="Zoom"><span>+</span></label>
    <span class="zoom-value"></span>
    <svg class="fit"><use href="#fit"/></svg>
    <a href="#" class="update">Update available (click to download)</a>
  </div>
  <footer class="taskbar">
    <div class="weather"><svg><use href="#a-weather"/></svg><span>1</span></div>
    <div class="apps"></div>
    <div class="tray">
      <svg class="i12 flip"><use href="#chev"/></svg>
      <svg class="i18"><use href="#cloud"/></svg>
      <span class="lang">ENG</span>
      <svg class="i18"><use href="#wifi"/></svg>
      <svg class="i18"><use href="#sound"/></svg>
      <svg class="i18"><use href="#battery"/></svg>
      <time class="clock"></time>
    </div>
  </footer>
</template>

<main>
  <article class="window" data-page="1" data-pages="1" data-zoom="53" data-time="4:28 PM">
    <div class="chrome"></div>
    <div class="workspace">
      <nav class="rail"></nav>
      <div class="center">
        <div class="stage">
          <div class="canvas">
            <div class="report report-1">
              <div class="kpis">
                <section class="visual kpi"><strong>$253.25bn</strong><span>Total Box Office</span></section>
                <section class="visual kpi kpi-short"><strong>57.56%</strong><span>Average Margin</span></section>
                <section class="visual kpi"><strong>254</strong><span>Total Movies with Oscars</span></section>
              </div>
              <div class="genre-card"><svg id="genre-chart" class="chart" viewBox="217 160 499 380"></svg></div>
            </div>
          </div>
          <aside class="filters">
            <h2 class="filters-head"><svg class="i16"><use href="#funnel"/></svg><span>Filters</span><svg class="eye"><use href="#eye"/></svg><svg class="i14"><use href="#dbl"/></svg></h2>
            <label class="filters-search"><svg class="i16"><use href="#find"/></svg><input type="search" placeholder="Search" aria-label="Search filters"></label>
            <hr>
            <div class="filters-title"><span>Filters on this page</span><span>...</span></div>
            <div class="dropzone">Add data fields here</div>
            <div class="filters-title filters-all"><span>Filters on all pages</span><span>...</span></div>
            <div class="dropzone">Add data fields here</div>
          </aside>
        </div>
        <div class="pagebar"></div>
      </div>
      <aside class="pane viz">
        <h2>Visualizations<svg class="i14"><use href="#dbl"/></svg></h2>
        <h3>Build visual</h3>
        <div class="modes"><button class="mode mode-on" aria-label="Build visual"><svg><use href="#build"/></svg></button><button class="mode" aria-label="Format page"><svg><use href="#fmt-page"/></svg></button></div>
        <div class="notch notch-1"></div>
        <div class="gallery"></div>
        <div class="more">···</div>
        <div class="well well-first">Add data fields here</div>
        <div class="drill">
          <h4>Drill through</h4>
          <div class="drill-row"><span>Cross-report</span><label class="toggle"><input type="checkbox" aria-label="Cross-report"><span>Off</span></label></div>
          <div class="drill-row"><span>Keep all filters</span><label class="toggle"><input type="checkbox" checked aria-label="Keep all filters"><span>On</span></label></div>
        </div>
        <div class="well">Add drill-through fields here</div>
        <i class="thumb thumb-viz-1"></i>
      </aside>
      <aside class="pane data">
        <h2>Data<svg class="i14"><use href="#dbl"/></svg></h2>
        <label class="data-search"><svg class="i14"><use href="#findr"/></svg><input type="search" placeholder="Search" aria-label="Search data"></label>
        <div class="fields" data-from="tables"></div>
        <i class="thumb thumb-data thumb-data-1"></i>
      </aside>
    </div>
    <div class="bottom"></div>
  </article>

  <article class="window window-2" data-page="2" data-pages="2" data-zoom="62" data-time="4:35 PM" data-context>
    <div class="chrome"></div>
    <div class="workspace">
      <nav class="rail"></nav>
      <div class="center">
        <div class="stage">
          <div class="canvas">
            <div class="report report-2">
              <section class="visual line-card"><svg id="year-chart" class="chart" viewBox="81 171 755 225"></svg></section>
              <section class="visual slicer">
                <h4>Country<svg class="i12"><use href="#chev"/></svg></h4>
                <div id="countries"></div>
                <i class="thumb thumb-slicer"></i>
              </section>
              <section class="visual dates">
                <table><thead><tr><th>Date</th></tr></thead><tbody id="dates"></tbody></table>
                <i class="dot"></i>
              </section>
              <section class="visual selected tree-card">
                <h4>Sum of Budget by Director</h4>
                <svg id="treemap" class="chart" viewBox="0 0 321 181"></svg>
                <div class="visual-tools"><svg><use href="#funnel"/></svg><svg><use href="#focus"/></svg><span>···</span></div>
              </section>
            </div>
          </div>
          <aside class="filters-closed"><svg class="i14"><use href="#dbl-l"/></svg><svg class="i12 turned"><use href="#funnel"/></svg><h2>Filters</h2></aside>
        </div>
        <div class="pagebar"></div>
      </div>
      <aside class="pane viz">
        <h2>Visualizations<svg class="i14"><use href="#dbl"/></svg></h2>
        <h3>Format visual</h3>
        <div class="modes modes-3"><button class="mode" aria-label="Build visual"><svg><use href="#build-off"/></svg></button><button class="mode mode-on" aria-label="Format visual"><svg><use href="#fmt-visual"/></svg></button><button class="mode" aria-label="Analytics"><svg><use href="#analytics"/></svg></button></div>
        <div class="notch notch-2"></div>
        <label class="fmt-search"><svg class="i16"><use href="#find"/></svg><input type="search" placeholder="Search" aria-label="Search format options"></label>
        <div class="fmt-tabs"><button class="fmt-on">Visual</button><button>General</button><span>···</span></div>
        <div class="fmt-scroll">
          <div class="fmt-row"><svg class="chev-d"><use href="#chev-d"/></svg><b>Legend</b><label class="toggle"><input type="checkbox" aria-label="Legend"><span>Off</span></label></div>
          <div class="fmt-shade">
            <div class="fmt-card muted"><svg class="chev-r"><use href="#chev-r"/></svg><b>Options</b></div>
            <div class="fmt-card muted"><svg class="chev-r"><use href="#chev-r"/></svg><b>Text</b></div>
            <div class="fmt-card muted"><svg class="chev-r"><use href="#chev-r"/></svg><b>Title</b><label class="toggle"><input type="checkbox" checked disabled aria-label="Title"><span>On</span></label></div>
            <button class="reset"><svg class="i14"><use href="#reset"/></svg>Reset to default</button>
          </div>
          <div class="fmt-row"><svg class="chev-d"><use href="#chev-d"/></svg><b>Colors</b></div>
          <div class="fmt-shade"><div class="fmt-card fmt-card-last"><b>Advanced controls</b></div></div>
        </div>
        <i class="thumb thumb-viz-2"></i>
      </aside>
      <aside class="pane data">
        <h2>Data<svg class="i14"><use href="#dbl"/></svg></h2>
        <label class="data-search"><svg class="i14"><use href="#findr"/></svg><input type="search" placeholder="Search" aria-label="Search data"></label>
        <div class="fields fields-scrolled" data-from="movies" data-checked="Budget,Director"></div>
        <i class="thumb thumb-data thumb-data-2"></i>
      </aside>
    </div>
    <div class="bottom"></div>
  </article>

  <article class="window window-3" data-page="3" data-pages="3" data-zoom="62" data-time="4:49 PM" data-context data-restored>
    <div class="chrome"></div>
    <div class="workspace">
      <nav class="rail"></nav>
      <div class="center">
        <div class="stage">
          <div class="canvas">
            <div class="report report-3">
              <section class="visual directors">
                <div class="directors-scroll">
                  <table>
                    <thead><tr><th>Director</th><th>Sum of Nominations</th><th>Sum of Oscar Wins</th><th>Average of Nominations</th></tr></thead>
                    <tbody id="directors"></tbody>
                  </table>
                </div>
                <table class="totals"><tbody><tr><td>Total</td><td>2207</td><td>683</td><td>1.84</td></tr></tbody></table>
                <i class="thumb thumb-directors"></i>
              </section>
              <div class="column">
                <section class="visual word"><strong>Action</strong><span>First Genre</span></section>
                <section class="visual matrix">
                  <div class="matrix-scroll">
                    <table>
                      <thead><tr><th>Genre</th><th>Brazil</th><th>Can</th></tr></thead>
                      <tbody>
                        <tr><td>Action</td><td>00,000</td><td></td></tr>
                        <tr><td>Adventure</td><td>00,000</td><td></td></tr>
                        <tr><td>Animation</td><td>00,000</td><td></td></tr>
                        <tr><td>Awful</td><td></td><td></td></tr>
                      </tbody>
                    </table>
                  </div>
                  <div class="matrix-total"><b>Total</b><b>00,000</b><b>$30,600,000</b><b>$47</b></div>
                  <i class="thumb thumb-matrix-v"></i><i class="thumb thumb-matrix-h"></i>
                </section>
                <svg id="pie" class="chart pie" viewBox="443 463 184 142"></svg>
              </div>
              <div class="column">
                <section class="visual donut-card"><svg id="donut" class="chart" viewBox="658 161 194 151"></svg></section>
                <section class="visual word word-short"><strong>Long</strong><span>First RunTimeCategory</span></section>
                <section class="visual selected box-office">
                  <table><thead><tr><th></th><th>Total Box Office</th></tr></thead><tbody><tr><td></td><td>$253,247,176,718</td></tr></tbody></table>
                  <div class="visual-tools"><svg><use href="#funnel"/></svg><svg><use href="#focus"/></svg><span>···</span></div>
                </section>
              </div>
            </div>
          </div>
          <aside class="filters-closed"><svg class="i14"><use href="#dbl-l"/></svg><svg class="i12 turned"><use href="#funnel"/></svg><h2>Filters</h2></aside>
        </div>
        <div class="pagebar"></div>
      </div>
      <aside class="pane viz">
        <h2>Visualizations<svg class="i14"><use href="#dbl"/></svg></h2>
        <h3>Format visual</h3>
        <div class="modes modes-3"><button class="mode" aria-label="Build visual"><svg><use href="#build-off"/></svg></button><button class="mode mode-on" aria-label="Format visual"><svg><use href="#fmt-visual"/></svg></button><button class="mode" aria-label="Analytics"><svg><use href="#analytics"/></svg></button></div>
        <div class="notch notch-2"></div>
        <label class="fmt-search"><svg class="i16"><use href="#find"/></svg><input type="search" placeholder="Search" aria-label="Search format options"></label>
        <div class="fmt-tabs"><button>Visual</button><button class="fmt-on">General</button><span>···</span></div>
        <div class="fmt-scroll">
          <div class="fmt-shade fmt-shade-cut">
            <div class="fmt-card fmt-card-cut"><span class="spin"><input type="text" value="1 px" aria-label="Border width"><svg class="i12 flip"><use href="#chev"/></svg><svg class="i12"><use href="#chev"/></svg></span></div>
            <div class="fmt-card"><svg class="chev-r"><use href="#chev-r"/></svg><b>Shadow</b><label class="toggle"><input type="checkbox" checked aria-label="Shadow"><span>On</span></label></div>
            <button class="reset"><svg class="i14"><use href="#reset"/></svg>Reset to default</button>
          </div>
          <div class="fmt-row fmt-line"><svg class="chev-r"><use href="#chev-r"/></svg><b>Data format</b></div>
          <div class="fmt-row fmt-line"><svg class="chev-r"><use href="#chev-r"/></svg><b>Header icons</b><label class="toggle"><input type="checkbox" checked aria-label="Header icons"><span>On</span></label></div>
          <div class="fmt-row fmt-line"><svg class="chev-r"><use href="#chev-r"/></svg><b>Tooltips</b><label class="toggle"><input type="checkbox" checked aria-label="Tooltips"><span>On</span></label></div>
          <div class="fmt-row"><svg class="chev-r"><use href="#chev-r"/></svg><b>Alt text</b></div>
        </div>
        <i class="thumb thumb-viz-3"></i>
      </aside>
      <aside class="pane data">
        <h2>Data<svg class="i14"><use href="#dbl"/></svg></h2>
        <label class="data-search"><svg class="i14"><use href="#findr"/></svg><input type="search" placeholder="Search" aria-label="Search data"></label>
        <div class="fields fields-scrolled" data-from="budget" data-checked="Total Box Office"></div>
        <i class="thumb thumb-data thumb-data-3"></i>
      </aside>
    </div>
    <div class="bottom"></div>
  </article>
</main>
<script src="app.js"></script>
</body>
</html>
```

FILE: styles.css
```css
* { box-sizing: border-box; }
body { margin: 0; background: #fff; color: #252423; font: 11px/16px "Open Sans", "Noto Sans", sans-serif; overflow-x: clip; }
main { padding-bottom: 963px; overflow-x: clip; }
h2, h3, h4 { margin: 0; font-weight: 600; }
button, input { font: inherit; color: inherit; }
button { border: 0; padding: 0; background: none; }
input[type="search"] { border: 0; padding: 0; background: none; outline: 0; min-width: 0; width: 100%; appearance: none; }
input::placeholder { color: inherit; opacity: 1; }
a { color: inherit; text-decoration: none; }
svg { display: block; flex: none; overflow: visible; }
.sprite { position: absolute; width: 0; height: 0; overflow: hidden; }
.s { fill: none; stroke: currentColor; }
.s2 { fill: none; stroke: #444; stroke-width: 1.2; }
.so { stroke: #484644; }
.sb { fill: none; stroke: #2b88d8; stroke-width: 1.3; }
.s-lt { fill: none; stroke: #fff; }
.gb { fill: #7fbdee; stroke: #1f6fb5; }
.gg { fill: #c8c6c4; stroke: #605e5c; }
.segoe { font-family: "Open Sans", sans-serif; }
.din { font-family: Roboto, sans-serif; }
.serif { font-family: "Liberation Serif", serif; }
.i12 { width: 12px; height: 12px; }
.i14 { width: 14px; height: 14px; }
.i16 { width: 16px; height: 16px; }
.i18 { width: 18px; height: 18px; }
.flip { transform: rotate(180deg); }
.turned { transform: rotate(90deg); }

.window { background: #f3f2f1; }
.window-2 { margin: 17px 29px 0 -29px; }
.window-3 { margin-top: 550px; }

/* title bar */
.titlebar { height: 34px; display: grid; grid-template-columns: 469fr 400fr 411fr; align-items: center; background: #3b3a38; color: #fff; }
.titlebar-left { display: flex; align-items: center; gap: 14px; padding-left: 16px; }
.doc-name { margin-left: -5px; padding-top: 3px; }
.top-search { height: 25px; display: flex; align-items: center; gap: 12px; padding: 0 17px; background: #d4d4d2; border-radius: 2px; color: #26604f; font-size: 13px; }
.top-search svg { color: #444; }
.titlebar-right { display: flex; align-items: center; justify-content: flex-end; }
.signin { font-size: 11px; }
.avatar { width: 22px; height: 22px; margin: 0 13px 0 10px; }
.winbtn { width: 44px; height: 34px; display: grid; place-items: center; }

/* ribbon */
.ribbon { height: 126px; background: #fafafa; position: relative; z-index: 1; box-shadow: 0 1px 3px rgba(0, 0, 0, .22); }
.tabs { height: 36px; display: flex; align-items: flex-start; gap: 33px; padding-left: 23px; padding-right: 6px; font-size: 13px; }
.tab { height: 31px; padding-top: 4px; border-bottom: 3px solid transparent; white-space: nowrap; }
.tab-file { margin-right: 4px; }
.tab-active { border-color: #117865; font-weight: 600; }
.context-tabs { display: none; margin-left: -20px; gap: 3px; }
.window[data-context] .context-tabs { display: flex; }
.tab-context { padding-left: 16px; padding-right: 15px; background: #fff; color: #117865; font-weight: 600; }
.share { margin: 4px 0 0 auto; width: 83px; height: 24px; display: flex; align-items: center; justify-content: space-between; padding: 0 7px; border-radius: 4px; background: #117865; color: #fff; font-size: 11px; }
.on-dark { color: #fff; }
.groups { display: flex; height: 90px; }
.group { border-right: 1px solid #d8d6d4; height: 88px; display: flex; flex-direction: column; justify-content: space-between; }
.group-body { display: grid; padding-top: 5px; }
.group h3 { font-size: 10px; line-height: 12px; font-weight: 400; text-align: center; color: #3b3a39; }
.rb { display: flex; flex-direction: column; align-items: center; gap: 5px; min-width: 0; white-space: nowrap; height: 69px; }
.rb > svg { width: 30px; height: 30px; }
.mini { display: inline-block; width: 7px; height: 7px; stroke-width: 2; }
.disabled, .window:not([data-context]) .needs-selection { opacity: .38; }
.g-clipboard { width: 160px; }
.g-clipboard .group-body { grid-template-columns: 34px 96px; padding-left: 12px; column-gap: 6px; }
.clip-list { display: grid; grid-template-rows: 24px 24px 24px; }
.small-btn { display: flex; align-items: center; gap: 4px; white-space: nowrap; }
.g-data .group-body { grid-template-columns: 36px 60px 50px 45px 35px 60px 51px; padding-left: 10px; padding-right: 10px; }
.g-queries .group-body { grid-template-columns: 54px 45px; padding-left: 9px; padding-right: 6px; }
.g-insert .group-body { grid-template-columns: 36px 44px 46px; padding-left: 10px; padding-right: 10px; }
.g-calc .group-body { grid-template-columns: 74px 46px 51px; padding-left: 7px; padding-right: 7px; }
.g-sens { width: 73px; }
.g-share { width: 58px; }
.g-copilot .group-body { grid-template-columns: 76px 40px; padding-left: 6px; padding-right: 8px; }
.g-sens .rb, .g-share .rb { justify-self: center; }
.collapse { margin: auto 4px 2px auto; transform: rotate(180deg); }

/* workspace */
.workspace { display: flex; min-height: 488px; }
.rail { width: 41px; border-right: 1px solid #e1dfdd; }
.rail-btn { display: grid; place-items: center; width: 40px; height: 40px; color: #605e5c; }
.rail-active { border-left: 3px solid #117865; }
.center { flex: 1; min-width: 0; display: flex; flex-direction: column; }
.stage { flex: 1; display: flex; background: #fff; }
.canvas { flex: 1; min-width: 0; }
.pagebar { height: 35px; display: flex; align-items: stretch; font-size: 12px; }
.view-btn { width: 24px; display: grid; place-items: center; margin: 0 0 4px 10px; }
.view-mobile { margin-left: 20px; margin-right: 7px; }
.view-active { border-bottom: 3px solid #117865; }
.desktop { width: 20px; height: 18px; }
.phone { width: 14px; height: 22px; }
.page-arrow { width: 21px; display: grid; place-items: center; }
.page-arrow svg { width: 6px; height: 10px; }
.page-tab { width: 77px; background: #fff; border-left: 1px solid #c8c6c4; border-bottom: 4px solid transparent; padding-top: 4px; }
.page-tab-on { font-weight: 600; border-bottom-color: #117865; }
.page-add { width: 39px; background: #117865; display: grid; place-items: center; }
.page-add svg { width: 12px; height: 12px; }

/* report visuals */
.visual { position: relative; background: #fff; border: 1px solid #8f8f8f; box-shadow: 3px 3px 6px rgba(0, 0, 0, .3); }
.chart { width: 100%; height: auto; font-family: Roboto, sans-serif; }
.chart .t7 { font-size: 7px; fill: #605e5c; font-family: "Open Sans", sans-serif; }
.chart .t8 { font-size: 8px; fill: #605e5c; font-family: "Open Sans", sans-serif; }
.chart .b { font-weight: 600; fill: #3b3a39; }
.chart .title9 { font-size: 9px; font-weight: 500; fill: #252423; }
.chart .title10 { font-size: 10px; font-weight: 500; fill: #252423; }
.chart .grid { stroke: #e1dfdd; stroke-dasharray: 1 2; }
.chart .lead { fill: none; stroke: #b3b0ad; }
.report-1 { display: flex; gap: 3px; margin: 0 1px; padding-left: 3px; border-bottom: 2px dotted #444; height: 383px; }
.genre-card { flex: 1; min-width: 0; }
.kpis { width: 169px; flex: none; }
.kpi { height: 106px; margin-bottom: 22px; display: flex; flex-direction: column; align-items: center; justify-content: center; }
.kpi:first-child { margin-bottom: 30px; }
.kpi-short { height: 95px; }
.kpi strong { font: 500 28px/32px Roboto, sans-serif; color: #12239e; }
.kpi span { font-size: 8px; line-height: 12px; color: #605e5c; }

.report-2 { width: 794px; margin-left: 26px; padding: 10px 0 2px 11px; border: 2px dotted #444; border-width: 0 2px 2px; display: grid; grid-template-columns: 202px 220px 327px; grid-template-rows: 227px 199px; gap: 7px; height: 447px; }
.line-card { grid-column: 1 / -1; width: 757px; }
.slicer h4, .dates th { font: 500 9px/16px Roboto, sans-serif; }
.slicer h4 { display: flex; justify-content: space-between; padding: 0 7px 0 8px; color: #252423; }
.slicer svg { color: #777; }
.slicer label { display: flex; align-items: center; gap: 5px; height: 18px; padding-left: 8px; font-size: 9px; }
.slicer input { width: 10px; height: 10px; border: 1px solid #666; margin: 0; appearance: none; }
.dates { overflow: hidden; }
.dates table { border-collapse: collapse; margin: 1px 0 0 4px; width: 91px; }
.dates th { text-align: left; padding: 1px 4px 3px 3px; border-bottom: 1px solid #5aabf0; }
.dates td { font-size: 8px; line-height: 13px; padding: 0 3px; white-space: nowrap; }
.dates tbody tr:nth-child(even) { background: #ebebeb; }
.dot { position: absolute; right: 3px; top: 4px; width: 6px; height: 6px; border-radius: 3px; background: #999; }
.selected { border: 2px solid #b0aeac; }
.selected::after { content: ""; position: absolute; inset: -2px; pointer-events: none; --h: linear-gradient(#979593, #979593);
  background: var(--h) 0 0 / 9px 3px, var(--h) 0 0 / 3px 9px, var(--h) 100% 0 / 9px 3px, var(--h) 100% 0 / 3px 9px,
    var(--h) 0 100% / 9px 3px, var(--h) 0 100% / 3px 9px, var(--h) 100% 100% / 9px 3px, var(--h) 100% 100% / 3px 9px,
    var(--h) 50% 0 / 12px 3px, var(--h) 50% 100% / 12px 3px, var(--h) 0 50% / 3px 12px, var(--h) 100% 50% / 3px 12px;
  background-repeat: no-repeat; }
.tree-card { border-color: #dedcda; box-shadow: none; margin-left: -6px; width: 327px; padding-right: 2px; }
.tree-card h4 { font: 500 10px/13px Roboto, sans-serif; padding-left: 2px; }
.visual-tools { position: absolute; right: 2px; top: -21px; display: flex; align-items: center; gap: 12px; color: #777; background: #fff; height: 18px; padding: 0 2px; }
.visual-tools svg { width: 16px; height: 16px; }
.visual-tools span { color: #444; font-weight: 700; }

.report-3 { width: 794px; margin-left: 26px; padding: 0 0 0 5px; border: 2px dotted #444; border-width: 0 2px 2px; display: flex; height: 447px; }
.directors { flex: none; width: 361px; margin-right: 7px; border-width: 1px 1px 0; overflow: hidden; padding: 0 13px 0 3px; display: flex; flex-direction: column; }
.report-3 table { border-collapse: collapse; width: 100%; table-layout: fixed; font-size: 8px; line-height: 13px; }
.directors th { padding: 3px 3px 3px 0; font-weight: 400; text-align: right; border-bottom: 2px solid #b3d9fb; white-space: nowrap; }
.directors td { padding: 0 3px; text-align: right; white-space: nowrap; }
.directors th:first-child { padding-left: 3px; }
.directors th:first-child, .directors td:first-child { text-align: left; width: 90px; }
.directors th:nth-child(2), .directors td:nth-child(2) { width: 82px; }
.directors th:nth-child(3), .directors td:nth-child(3) { width: 76px; }
.directors tbody tr:nth-child(even) { background: #ebebeb; }
.directors-scroll { height: 427px; overflow: hidden; }
.directors .totals { border-top: 1px solid #4ca6f0; font-weight: 700; }
.totals td { line-height: 14px; }
.column { width: 184px; margin-right: 31px; display: flex; flex-direction: column; flex: none; }
.column:last-child { width: 196px; margin-right: 0; }
.word { height: 153px; display: flex; flex-direction: column; align-items: center; justify-content: center; margin-bottom: 24px; }
.word strong { font: 400 32px/34px Roboto, sans-serif; }
.word span { font-size: 8px; line-height: 14px; color: #605e5c; }
.word-short { height: 93px; margin-bottom: 35px; }
.donut-card { height: 153px; margin-bottom: 24px; }
.matrix { height: 87px; padding: 3px 11px 0 4px; overflow: hidden; }
.matrix-scroll { height: 61px; overflow: hidden; }
.matrix th { font-weight: 400; text-align: left; padding: 0 2px 3px; border-bottom: 1px solid #8cc4f5; white-space: nowrap; }
.matrix th:first-child { width: 72px; }
.matrix th:nth-child(2) { text-align: right; width: 52px; }
.matrix th:nth-child(3) { text-align: right; padding-right: 0; }
.matrix td { padding: 0 2px; white-space: nowrap; }
.matrix td:nth-child(2) { border-left: 1px solid #4ca6f0; padding: 0; }
.matrix tbody tr:nth-child(even) { background: #ebebeb; }
.matrix-total { display: flex; gap: 5px; font-size: 8px; line-height: 14px; padding-left: 2px; white-space: nowrap; margin-right: -8px; }
.matrix-total b:first-child { width: 65px; }
.pie { margin-top: 39px; }
.box-office { height: 129px; padding: 5px 2px; }
.report-3 .box-office table { width: 81px; }
.box-office th { font-weight: 400; white-space: nowrap; padding: 0 0 3px 3px; text-align: left; }
.box-office th:first-child { width: 9px; padding: 0; }
.box-office td:first-child { background: #ebebeb; border-top: 1px solid #8cc4f5; }
.box-office td:last-child { background: #118dff; padding: 0 0 0 3px; }
.box-office tbody::after { content: ""; display: table-cell; height: 12px; border-right: 1px solid #4ca6f0; }

/* filters pane */
.filters { width: 201px; border-left: 1px solid #b3b0ad; padding: 0 9px 0 8px; background: #fff; }
.filters-head { display: flex; align-items: center; gap: 9px; height: 40px; font-size: 14px; padding: 0 0 0 4px; }
.filters-head span { flex: 1; }
.eye { width: 14px; height: 10px; margin-right: 6px; }
.filters-search { height: 34px; margin: 5px 4px 0 0; display: flex; align-items: center; gap: 9px; padding: 0 10px; border: 1px solid #b3b0ad; border-radius: 2px; font-size: 12px; }
.filters hr { margin: 4px -9px 15px -8px; border: 0; border-top: 2px solid #e1dfdd; }
.filters-title { display: flex; justify-content: space-between; padding-right: 4px; }
.dropzone { margin-top: 9px; height: 45px; border: 1px solid #d8d6d4; border-radius: 2px; display: grid; place-items: center; }
.filters-all { margin-top: 26px; }
.filters-closed { width: 33px; border-left: 1px solid #c8c6c4; display: flex; flex-direction: column; align-items: center; padding-top: 12px; }
.filters-closed .turned { margin: 14px 0 12px; }
.filters-closed h2 { writing-mode: vertical-rl; font-size: 13px; }

/* right panes */
.pane { contain: size; position: relative; overflow: hidden; width: 180px; border-left: 1px solid #e1dfdd; }
.viz { width: 181px; }
.pane h2 { height: 38px; padding: 2px 8px 0 8px; display: flex; align-items: center; justify-content: space-between; font-size: 14px; }
.viz h3 { padding-left: 8px; font-size: 11px; }
.modes { display: flex; gap: 32px; padding: 4px 8px 0; }
.mode { width: 32px; height: 31px; display: grid; place-items: center; }
.mode svg { width: 26px; height: 26px; }
.mode-on { background: #d2d0ce; }
.modes-3 { gap: 33px; }
.notch { height: 13px; border-bottom: 1px solid #b3b0ad; position: relative; }
.notch::after { content: ""; position: absolute; width: 11px; height: 11px; bottom: -6px; left: 18px; background: #f3f2f1; border: 1px solid #b3b0ad; border-width: 1px 0 0 1px; transform: rotate(45deg); clip-path: polygon(0 0, 100% 0, 0 100%); }
.notch-2::after { left: 83px; }
.gallery { display: grid; grid-template-columns: repeat(6, 28px); grid-auto-rows: 28px; padding: 7px 0 0 5px; }
.gallery button { display: grid; place-items: center; }
.gallery svg { width: 20px; height: 20px; }
.more { font-size: 16px; line-height: 20px; padding: 0 12px 10px; border-bottom: 1px solid #e1dfdd; }
.well { margin: 0 6px 0 4px; height: 25px; line-height: 24px; padding-left: 8px; background: #fff; border: 1px dotted #c8c6c4; white-space: nowrap; }
.well-first { margin-top: 1px; padding-left: 9px; line-height: 20px; }
.drill { padding: 9px 22px 0 11px; }
.drill h4 { line-height: 20px; }
.drill-row { display: flex; justify-content: space-between; align-items: center; height: 26px; margin-bottom: 1px; }
.toggle { position: relative; display: flex; align-items: center; justify-content: space-between; flex-direction: row-reverse; width: 33px; height: 16px; padding: 0 4px; border: 1px solid #8a8886; border-radius: 8px; background: #fff; font-size: 9px; color: #605e5c; }
.toggle::after { content: ""; width: 9px; height: 9px; border-radius: 5px; background: #605e5c; }
.toggle input { position: absolute; inset: 0; opacity: 0; margin: 0; }
.toggle:has(:checked) { flex-direction: row; background: #117865; border-color: #117865; color: #fff; }
.toggle:has(:checked)::after { background: #fff; }
.toggle:has(:disabled) { background: #c8c6c4; border-color: #c8c6c4; }
.thumb { position: absolute; background: #8a8886; border-radius: 3px; width: 6px; right: 0; }
.thumb-viz-1 { top: 366px; height: 114px; }
.thumb-viz-2 { top: 191px; height: 20px; }
.thumb-viz-3 { top: 373px; height: 107px; }
.thumb-data { width: 8px; right: 4px; border-radius: 0; }
.thumb-data-1 { top: 77px; height: 281px; }
.thumb-data-2 { top: 189px; height: 224px; }
.thumb-data-3 { top: 255px; height: 225px; }
.thumb-slicer { width: 5px; right: 3px; top: 14px; height: 92px; border-radius: 0; }
.thumb-directors { width: 5px; right: 4px; top: 3px; height: 28px; background: #b3b0ad; }
.thumb-matrix-v { width: 5px; right: 4px; top: 4px; height: 11px; background: #b3b0ad; }
.thumb-matrix-h { width: 12px; left: 17px; bottom: 3px; height: 5px; background: #b3b0ad; }

.fmt-search { margin: 7px 8px 0 7px; height: 28px; display: flex; align-items: center; gap: 6px; padding: 0 7px; border: 1px solid #8a8886; border-radius: 2px; font-size: 12px; color: #484644; }
.fmt-tabs { display: flex; gap: 18px; padding: 17px 15px 0 11px; font-size: 12px; line-height: 18px; height: 53px; }
.fmt-tabs button { height: 24px; border-bottom: 2px solid transparent; }
.fmt-tabs .fmt-on { font-weight: 600; border-color: #117865; }
.fmt-tabs span { margin-left: auto; font-weight: 700; }
.fmt-scroll { height: 290px; overflow: hidden; }
.fmt-row { height: 40px; display: flex; align-items: center; padding: 0 8px; gap: 5px; }
.fmt-row b, .fmt-card b { font-weight: 600; flex: 1; }
.fmt-line { border-bottom: 1px solid #d8d6d4; }
.fmt-line + .fmt-line { height: 41px; }
.fmt-shade { background: #e1dfdd; padding: 9px 8px 0 7px; }
.fmt-card { height: 40px; margin-bottom: 8px; display: flex; align-items: center; gap: 5px; padding: 0 8px 0 10px; background: #f6f5f4; border-radius: 3px; box-shadow: 0 1px 2px rgba(0, 0, 0, .25); }
.fmt-card-last { height: 32px; }
.fmt-shade-cut { padding-top: 0; }
.fmt-card-cut { height: 38px; padding: 0 8px; align-items: flex-start; padding-top: 6px; }
.spin { position: relative; width: 71px; height: 25px; border: 1px solid #8a8886; border-radius: 2px; background: #fff; color: #605e5c; display: grid; grid-template: 1fr 1fr / 1fr 14px; align-items: center; }
.spin input { grid-row: 1 / 3; border: 0; background: none; width: 100%; padding: 0 5px; outline: 0; }
.muted { color: #a19f9d; }
.reset { height: 32px; display: flex; align-items: center; gap: 6px; padding-left: 2px; padding-bottom: 7px; color: #484644; }
.chev-r { width: 8px; height: 12px; }
.chev-d { width: 12px; height: 9px; }

/* data pane */
.data-search { margin: 7px 5px 0 5px; height: 25px; display: flex; align-items: center; gap: 8px; padding: 0 11px; background: #fff; border: 1px solid #d8d6d4; border-bottom: 2px solid #a19f9d; border-radius: 4px; font-size: 12px; color: #605e5c; }
.fields { margin-top: 9px; height: 401px; overflow: hidden; }
.fields-scrolled { margin-top: 1px; height: 409px; }
.field { display: grid; grid-template-columns: 14px 14px 1fr; gap: 5px; align-items: center; height: 24px; padding-left: 43px; white-space: nowrap; color: #3b3a39; }
.field > svg { width: 14px; height: 14px; }
.field input { appearance: none; margin: 0; width: 12px; height: 13px; border: 1px solid #a19f9d; border-radius: 2px; background: #fafafa; position: relative; }
.field input:checked { background: #117865; border-color: #117865; }
.field input:checked::after { content: ""; position: absolute; left: 3px; top: 1px; width: 3px; height: 6px; border: 1px solid #fff; border-width: 0 1px 1px 0; transform: rotate(40deg); }
.field-table { grid-template-columns: 10px 16px 1fr; gap: 3px; padding-left: 15px; }
.field-table .twist { width: 8px; height: 11px; }
.field-table .twist-open { width: 11px; height: 8px; }
.field-table .ok { width: 18px; height: 18px; }

/* status bar and taskbar */
.statusbar { height: 24px; display: flex; align-items: center; padding: 2px 4px 0; border-top: 1px solid #e1dfdd; border-bottom: 1px solid #444; color: #605e5c; }
.zoom { margin-left: auto; display: flex; align-items: center; gap: 3px; font-size: 13px; }
.zoom input { appearance: none; width: 100px; margin: 0 4px; height: 12px; background: linear-gradient(#777, #777) 0 50% / 100% 1px no-repeat, linear-gradient(#777, #777) 50% 50% / 1px 6px no-repeat; }
.zoom input::-webkit-slider-thumb { appearance: none; width: 4px; height: 12px; background: #484644; }
.zoom-value { margin-left: 12px; width: 24px; }
.fit { width: 16px; height: 14px; margin: 0 14px 0 22px; }
.taskbar { height: 48px; display: grid; grid-template-columns: 290fr auto 330fr; align-items: center; background: #eee; }
.weather { position: relative; width: 26px; margin: 0 0 6px 22px; }
.weather svg { width: 26px; height: 28px; }
.weather span { position: absolute; left: 10px; top: 0; width: 16px; text-align: center; color: #fff; font-size: 10px; }
.apps { display: flex; }
.app { width: 44px; height: 48px; padding: 12px 10px; position: relative; display: block; }
.app svg { width: 24px; height: 24px; position: relative; z-index: 1; }
.app .app-wide { width: 28px; height: 28px; margin-top: -4px; }
.app::before { content: ""; position: absolute; inset: 4px 2px; border-radius: 4px; }
.app-alert::before { background: #e9aeab; }
.window:not([data-context]) .app-soft::before { background: #ecc3c1; }
.app-current::before { background: #fafafa; }
.app::after { content: ""; position: absolute; left: 50%; bottom: 5px; width: 0; height: 3px; border-radius: 2px; transform: translateX(-50%); }
.app-open::after { width: 6px; background: #8a8886; }
.app-alert::after { width: 32px; height: 4px; bottom: 4px; background: #c42b1c; }
.app-soft::after { width: 22px; }
.app-current::after { width: 16px; background: #0078d4; }
.badge { position: absolute; z-index: 2; right: 5px; top: 8px; padding: 0 1px; background: #e84c4c; color: #fff; border-radius: 3px; font-size: 8px; line-height: 11px; }
.tray { display: flex; align-items: center; justify-content: flex-end; gap: 7px; padding-right: 20px; font-size: 11px; }
.lang { margin: 0 11px 0 10px; }
.tray .i18 { width: 17px; height: 17px; }
.tray .flip { margin-right: 9px; }
.clock { text-align: right; margin-left: 8px; min-width: 56px; }
```

FILE: app.js
```js
const $ = (sel, root = document) => root.querySelector(sel);
const fill = (target, id) => target.append($('#' + id).content.cloneNode(true));
const COLORS = { 12: '#118dff', 15: '#12239e', 18: '#e66c37', PG: '#6b007b', U: '#e044a7', Unknown: '#744ec2' };

/* Shared window parts */
const APPS = [
  ['windows'], ['search'], ['taskview'], ['files', 'open'], ['edge', 'alert'], ['help', '', 'wide'], ['chrome'],
  ['insta', 'alert'], ['wps'], ['avast', 'open'], ['telegram', 'open', 'wide'], ['code', 'open'],
  ['yandex', 'alert app-soft'], ['gpt', 'open'], ['pbi', 'current'],
];
document.querySelectorAll('.window').forEach((win) => {
  const { page, pages, zoom, time } = win.dataset;
  fill($('.chrome', win), 'chrome-template');
  fill($('.rail', win), 'rail-template');
  fill($('.pagebar', win), 'pagebar-template');
  fill($('.bottom', win), 'bottom-template');
  if ('restored' in win.dataset) $('.winbtn-size use', win).setAttribute('href', '#restore');
  let tabs = '';
  for (let i = 1; i <= +pages; i++) tabs += `<button class="page-tab ${i === +page ? 'page-tab-on' : ''}">Page ${i}</button>`;
  $('.pagebar', win).insertAdjacentHTML('beforeend', tabs + '<button class="page-add" aria-label="New page"><svg><use href="#plus"/></svg></button>');
  $('.page-count', win).textContent = `Page ${page} of ${pages}`;
  $('.zoom input', win).value = +zoom === 53 ? 43 : 51;
  $('.zoom-value', win).textContent = zoom + '%';
  $('.clock', win).innerHTML = `${time}<br>8/12/2025`;
  $('.apps', win).innerHTML = APPS.map(([name, state, wide]) =>
    `<a href="#" class="app ${state ? 'app-' + state : ''}" aria-label="${name}"><svg class="${wide ? 'app-wide' : ''}"><use href="#a-${name}"/></svg>${name === 'telegram' ? `<span class="badge">${page === '3' ? 251 : 250}</span>` : ''}</a>`).join('');
});

/* Visual gallery */
$('.gallery').innerHTML = Array.from({ length: 42 }, (_, i) => `<button aria-label="Visual type ${i + 1}"><svg><use href="#v${i + 1}"/></svg></button>`).join('');

/* Field lists */
const MOVIES = [
  ['Average Budget', 'calc'], ['Average Margin', 'calc'], ['Average Nomi...', 'calc'], ['BoxOffice', 'sum'], ['Budget', 'sum'],
  ['Certificate'], ['Country'], ['Director'], ['Genre'], ['ID', 'sum'], ['Nominations', 'sum'], ['Oscar Wins', 'sum'],
  ['Profit', 'colsum'], ['Release Date'], ['Run Time', 'sum'], ['RunTimeCate...', 'colfx'], ['Title'],
  ['Top Genre by ...', 'calc'], ['Total Box Office', 'calc'], ['Total Movies ...', 'calc'], ['YoY Box Offic...', 'calc'],
];
const tableRow = (name, icon, open) =>
  `<div class="field field-table"><svg class="${open ? 'twist-open' : 'twist'}"><use href="#${open ? 'chev-d' : 'chev-r'}"/></svg><svg class="${icon === 'tbl-ok' ? 'ok' : ''}"><use href="#${icon}"/></svg><span>${name}</span></div>`;
document.querySelectorAll('.fields').forEach((list) => {
  const { from, checked = '' } = list.dataset;
  const on = checked.split(',');
  const count = { tables: 14, movies: 16, budget: 21 }[from];
  const head = {
    tables: tableRow('AllMeasures', 'tbl') + tableRow('DateTable', 'tbl-date') + tableRow('Movies', 'tbl', true),
    movies: tableRow('Movies', 'tbl-ok', true),
    budget: '',
  }[from];
  list.innerHTML = head + MOVIES.slice(from === 'budget' ? 4 : 0, count).map(([name, icon]) =>
    `<label class="field"><input type="checkbox" ${on.includes(name) ? 'checked' : ''}>${icon ? `<svg><use href="#${icon}"/></svg>` : '<i></i>'}<span>${name}</span></label>`).join('');
});

/* SVG helpers */
const text = (x, y, s, cls, extra = '') => `<text x="${x}" y="${y}" class="${cls}" ${extra}>${s}</text>`;
const rect = (x, y, w, h, color) => `<rect x="${x}" y="${y}" width="${w}" height="${h}" fill="${color}"/>`;
const line = (x1, y1, x2, y2) => `<path class="grid" d="M${x1} ${y1}L${x2} ${y2}"/>`;
const END = 'text-anchor="end"', MID = 'text-anchor="middle"';

/* Box office by genre: segment ends in px from the axis */
const GENRES = [
  ['Action', [280, 379, 403, 412]], ['Science Fiction', [215, 251, 262, 310, 346]], ['Animation', [0, 1, 1, 81, 328]],
  ['Adventure', [114, 141, 142, 210, 218]], ['Thriller', [86, 142, 173, 206]], ['Fantasy', [103, 111, 112, 182, 183]],
  ['Comedy', [54, 123, 125, 173, 180]], ['Drama', [14, 47, 67, 85]], ['Romance', [30, 42, 42, 49, 51]],
  ['Biography', [17, 29, 37, 39]], ['Crime', [8, 17, 34, 35]], ['War', [4, 24, 28, 31]], ['Awful', [31]],
  ['Horror', [0, 15, 29]], ['Mystery', [20, 24]], ['Martial Arts', [14, 19, 24]], ['Musical', [4, 5, 5, 16, 23]],
  ['Western', [3, 12, 19, 21]], ['Disaster', [9, 10, 10, 17]], ['History', [0, 7, 7, 11]], ['Sport', [3, 5, 5, 11]],
  ['Romantic Comedy', [3, 9, 10, 10]], ['Family', [0, 0, 0, 7, 10]], ['Documentary', [1]],
];
{
  const palette = [COLORS[12], COLORS[15], COLORS[18], COLORS.PG, COLORS.U];
  let out = text(221, 169, 'Total Box Office by Genre and Certificate', 'title9') + text(221, 184, 'Certificate', 't7 b');
  [[263, '12'], [280, '15'], [297, '18'], [314, 'PG'], [333, 'U'], [347, 'Unknown']].forEach(([x, name]) => {
    out += `<circle cx="${x}" cy="181" r="3" fill="${COLORS[name]}"/>` + text(x + 4, 184, name, 't7');
  });
  [0, 10, 20, 30, 40].forEach((v) => {
    const x = 292 + v * 9.2;
    out += line(x, 193, x, 517) + text(x, 527, `$${v}bn`, 't7', MID);
  });
  GENRES.forEach(([name, ends], row) => {
    const y = 198 + row * 13.28;
    let at = 0;
    out += text(288, y + 8, name, 't7', END);
    ends.forEach((end, i) => {
      if (end > at) out += rect(292 + at, y.toFixed(1), end - at, 10.6, palette[i]);
      at = end;
    });
  });
  out += text(499, 538, 'Total Box Office', 't7 b', MID) + text(0, 0, 'Genre', 't7 b', MID + ' transform="translate(229 356) rotate(-90)"');
  $('#genre-chart').innerHTML = out;
}

/* Box office by year, $bn, 1921 to 2016 */
{
  const values = [
    ...Array(16).fill(0), .2, .05, .25, 0, 0, 0, 0, 0, 0, 0, 0, 0, .05, .3, .05, .05, .1, .1, .05, .25, .05, .1, .15, .35, .25, .3, .35, .4, .55,
    .05, .55, .5, .4, .35, .35, .4, 1, .7, .9, .6, 2, 1.35, 1.4, 1.35, 1.2, 2.05, 1.6, 1.95, 1.8, 1.65, 2.05, 2.25, 3.25, 3.25, 3.4, 4,
    4.2, 4.2, 4.4, 4.9, 3.95, 7.15, 4.95, 4.95, 6.4, 8.8, 8.1, 8.95, 8.15, 8.55, 9.97, 9.1, 11.4, 10.4, 10.8, 14.7, 12.6, 12.4, 15, 14.15,
  ];
  let out = text(84, 181, 'Total Box Office by Year', 'title10');
  [20, 15, 10, 5, 0].forEach((v, i) => {
    const y = 192 + i * 44.8;
    out += line(122, y, 825, y) + text(118, y + 3, `$${v}bn`, 't7', END);
  });
  for (let year = 1920; year <= 2020; year += 20) {
    const x = 130 + (year - 1920) * 6.95;
    out += line(x, 192, x, 371) + text(x, 381, year, 't7', MID);
  }
  const points = values.map((v, i) => `${(130 + (i + 1) * 6.95).toFixed(1)},${(371 - v * 8.96).toFixed(1)}`).join(' ');
  out += `<polyline points="${points}" fill="none" stroke="#118dff" stroke-width="1.700" stroke-linejoin="round"/>`;
  out += text(477, 393, 'Year', 'title9', MID) + text(0, 0, 'Total Box Office', 'title9', MID + ' transform="translate(92 281) rotate(-90)"');
  $('#year-chart').innerHTML = out;
}

/* Slicer and date table */
$('#countries').innerHTML = ['(Blank)', 'Australia', 'Brazil', 'Canada', 'China', 'Denmark', 'France', 'Germany', 'Hong Kong', 'Indonesia']
  .map((c) => `<label><input type="checkbox">${c}</label>`).join('');
$('#dates').innerHTML = Array.from({ length: 14 }, (_, i) => `<tr><td>1/${i + 1}/1921 12:00:00 AM</td></tr>`).join('');

/* Budget treemap */
{
  const named = [
    [0, 45, [['Steven S...', '#3c3253', 31], ['Ridley Sc...', '#8250bd', 63], ['Michael ...', '#524b45', 90], ['Peter Jac...', '#2a300f', 115], ['David Ya...', '#2c1a60', 138], ['Tim Burt...', '#5a6c64', 160], ['Martin S...', '#ecd9a0', 181]]],
    [46, 34, [['Christ...', '#54333b', 26], ['Andre...', '#0d93db', 49], ['Ron H...', '#fc0d40', 72], ['J. J. A...', '#33222e', 94], ['Zack ...', '#1022a0', 117], ['Bryan...', '#ccf861', 138], ['Rolan...', '#33483b', 160], ['James...', '#51bf73', 181]]],
    [81, 29, [['Jon ...', '#353033', 21], ['Gore...', '#4b5446', 43], ['Fran...', '#cfe2c4', 65], ['Andr...', '#ff7b80', 85], ['John...', '#155a7b', 104], ['Anto...', '#28911a', 124], ['Sam ...', '#dfbfe3', 144], ['Pete...', '#22241f', 163], ['McG', '#8d7028', 181]]],
    [111, 28, [['Sam...', '#7a66a8', 19], ['Joh...', '#b06379', 39], ['Justi...', '#bf5638', 58], ['Wol...', '#2e3a38', 76], ['Clin...', '#3b3647', 95], ['Rob...', '#333c50', 113], ['Joss...', '#6c6463', 130], ['Barr...', '#38114f', 148], ['Mar...', '#e2cb84', 165], ['Bret...', '#a85f82', 181]]],
    [140, 24, [['Pet...', '#5f5215', 17], ['Lou...', '#b54b05', 35], ['Ge...', '#26202e', 51], ['Ant...', '#229a86', 67], ['Bra...', '#8198e8', 83], ['Ma...', '#89b3a3', 97], ['Ro...', '#4b5145', 112], ['', '#0dff5c', 126], ['', '#38140f', 139], ['', '#702796', 153], ['', '#1b8b46', 167], ['', '#2c1060', 181]]],
  ];
  let out = '';
  named.forEach(([x, w, cells]) => {
    let top = 0;
    cells.forEach(([name, color, bottom]) => {
      out += rect(x, top, w, bottom - top - 1, color) + (name ? `<text x="${x + 3}" y="${top + 11}" font-size="8" fill="#fff">${name}</text>` : '');
      top = bottom;
    });
  });
  let seed = 11;
  const rnd = () => (seed = (seed * 16807) % 2147483647) / 2147483647;
  const anyColor = () => `hsl(${Math.round(rnd() * 360)} ${Math.round(rnd() * rnd() * 100)}% ${Math.round(25 + rnd() * 45)}%)`;
  const some = (n) => Array.from({ length: n }, anyColor);
  const row = (x, y, w, h, colors, gap = 1) => colors.forEach((c, i) => { out += rect((x + i * w / colors.length).toFixed(1), y.toFixed(1), (w / colors.length - gap).toFixed(1), (h - gap).toFixed(1), c); });
  const col = (x, y, w, h, colors, gap = 1) => colors.forEach((c, i) => { out += rect(x.toFixed(1), (y + i * h / colors.length).toFixed(1), (w - gap).toFixed(1), (h / colors.length - gap).toFixed(1), c); });
  row(165, 0, 157, 23, ['#b52690', '#140f2e', '#5a491a', '#95058a', '#b83355', '#7a4fc5', '#475350', '#63ff63', '#3f8efc', '#cdb9de', '#9326b3']);
  row(165, 23, 157, 21, ['#2c7f80', '#4a00b5', '#211c20', '#fb15a8', '#60fcb8', '#0d3a5c', '#6e6066', '#9ff2b4', '#c711f0', '#8695b8', '#587a48', '#84376e']);
  col(165, 44, 20, 138, ['#a5a68e', '#c84b95', '#0c4f1e', '#135890', '#67b500', '#bfdfdf', '#a79b8e', '#8d3f28', '#e25dfb', '#7b6d38', '#fc58f2', '#807c89']);
  row(185, 44, 137, 17, ['#837c76', '#5aa7ff', '#5d5b67', '#271a1b', '#635f57', '#32504a', '#fb50c5', '#6bf542', '#5a6f5c', '#9562fa', '#b8fc75', '#0ab90a']);
  col(185, 61, 16, 121, ['#127b67', '#7c6b48', '#bf000f', '#3159b8', '#4f7347', '#135d0f', '#b37e70', '#ff85a0', '#cc3b4b', '#879df8', '#464c2b']);
  col(201, 61, 16, 121, ['#10105c', '#fc7cf3', '#00dbbd', '#1d2329', '#7f1291', '#7f8780', '#16542a', '#fb5ca5', '#fbe27f', '#6b645c', '#cdfb6b', '#5775f8']);
  row(217, 61, 105, 15, ['#2e3631', '#b2a5ec', '#635ff9', '#475043', '#4c4bb0', '#550f17', '#2e4c51', '#95441c', '#b842c0', '#635c6b', '#5224b0']);
  row(217, 76, 105, 14, ['#322b28', '#6c4157', '#82dbfc', '#c17f4e', '#b75bf8', '#89a79b', '#5f6b5c', '#6b7aa6', '#82b34c', '#424a2b', '#4e4638', '#3a8856']);
  let x = 217, y = 90, size = 13;
  while (size > 2) {
    const gap = size > 6 ? 1 : .7;
    for (let i = 0; i < 2; i++) { col(x, y, size, 182 - y, some(Math.round((182 - y) / (size * .65))), gap); x += size; }
    for (let i = 0; i < 2; i++) { row(x, y, 322 - x, size * .85, some(Math.round((322 - x) / (size * .6))), gap); y += size * .85; }
    size *= .77;
  }
  $('#treemap').innerHTML = out;
}

/* Directors table */
const DIRECTORS = `Adam McKay|0|0|0.00
Adrian Lyne|10|1|3.33
Akira Kurosawa|10|1|1.11
Akiva Schaffer|0|0|0.00
Alan J. Pakula|8|4|4.00
Alan Taylor|0|0|0.00
Albert Pyun|0|0|0.00
Alejandro G. Inarritu|23|7|7.67
Alex Garland|2|1|2.00
Alex Proyas|1|0|0.50
Alexander Mackendrick|1|0|1.00
Alfonso Cuaron|15|7|5.00
Alfred Hitchcock|11|0|1.83
Alfred L. Werker|0|0|0.00
Allan Dwan|4|0|4.00
Amy Heckerling|0|0|0.00
Anatole Litvak|2|1|2.00
Andrew Adamson|7|2|1.75
Andrew Davis|9|1|3.00
Andrew Dominik|2|0|2.00
Andrew Stanton|10|2|2.50
Andrzej Bartkowiak|0|0|0.00
Andy Tennant|0|0|0.00
Ang Lee|36|12|6.00
Angelina Jolie|3|0|3.00
Anna Foerster|0|0|0.00
Anthony Mann|3|0|3.00
Anthony Minghella|12|9|12.00
Anthony Russo|1|0|0.50
Antoine Fuqua|2|1|0.20
Arthur Allan Seidelman|0|0|0.00
Arthur Hiller|2|1|1.00`;
$('#directors').innerHTML = DIRECTORS.split('\n').map((r) => `<tr>${r.split('|').map((c) => `<td>${c}</td>`).join('')}</tr>`).join('');

/* Pie and donut */
function slice(cx, cy, r, from, to, color, hole = 0) {
  const at = (deg, rad) => `${(cx + rad * Math.sin(deg * Math.PI / 180)).toFixed(1)} ${(cy - rad * Math.cos(deg * Math.PI / 180)).toFixed(1)}`;
  const big = to - from > 180 ? 1 : 0;
  const back = hole ? `L${at(to, hole)}A${hole} ${hole} 0 ${big} 0 ${at(from, hole)}` : `L${cx} ${cy}`;
  return `<path d="M${at(from, r)}A${r} ${r} 0 ${big} 1 ${at(to, r)}${back}z" fill="${color}" ${hole ? 'stroke="#777" stroke-width=".6"' : ''}/>`;
}
{
  let out = text(445, 475, 'Total Box Office by Certificate', 'title10');
  [[0, 157, '12'], [157, 223, '15'], [223, 288, 'PG'], [288, 337, 'U'], [337, 360, '18']].forEach(([a, b, k]) => { out += slice(509, 541, 40, a, b, COLORS[k]); });
  out += '<path class="lead" d="M475 504h7l3 4M535 508l4-3h5M463 564h8l3-3M514 583v3h7"/>';
  out += text(446, 503, '$34.48...', 't7') + text(446, 513, '(13.61%)', 't7') + text(546, 510, '$... (...)', 't7') + text(447, 562, '$4...', 't7') + text(447, 572, '(1...)', 't7') + text(524, 584, '$47.19bn', 't7') + text(524, 594, '(18.63%)', 't7');
  out += text(572, 498, 'Certificate', 't7 b');
  ['12', '15', 'PG', 'U', '18', 'Unknown'].forEach((k, i) => { out += `<circle cx="576" cy="${508 + i * 15.7}" r="3" fill="${COLORS[k]}"/>` + text(580, 511 + i * 15.7, k, 't7'); });
  $('#pie').innerHTML = out;

  const tones = ['#339dff', '#2f3ea8', '#e97b4b'];
  out = text(661, 170, 'Total Movies with Oscars by', 'title10') + text(661, 182, 'RunTimeCategory', 'title10');
  out += slice(722.5, 248, 39, 11, 241, tones[0], 20) + slice(722.5, 248, 39, 241, 364, tones[1], 20) + slice(722.5, 248, 39, 4, 11, tones[2], 20);
  out += '<path class="lead" d="M695 209h8l2 4M727 210v-6h7M712 293h8v-5"/>';
  out += text(693, 207, '87', 't7', END) + text(693, 217, '(34.25%)', 't7', END) + text(737, 203, '5', 't7') + text(737, 213, '(1.97%)', 't7') + text(710, 291, '162', 't7', END) + text(710, 301, '(63.78%)', 't7', END);
  out += text(784, 230, 'RunTimeCate...', 't8 b din');
  ['Long', 'Medium', 'Short'].forEach((k, i) => { out += `<circle cx="787" cy="${239 + i * 15.6}" r="3.300" fill="${tones[i]}" stroke="#666" stroke-width=".6"/>` + text(792, 242 + i * 15.6, k, 't8'); });
  $('#donut').innerHTML = out;
}
```
